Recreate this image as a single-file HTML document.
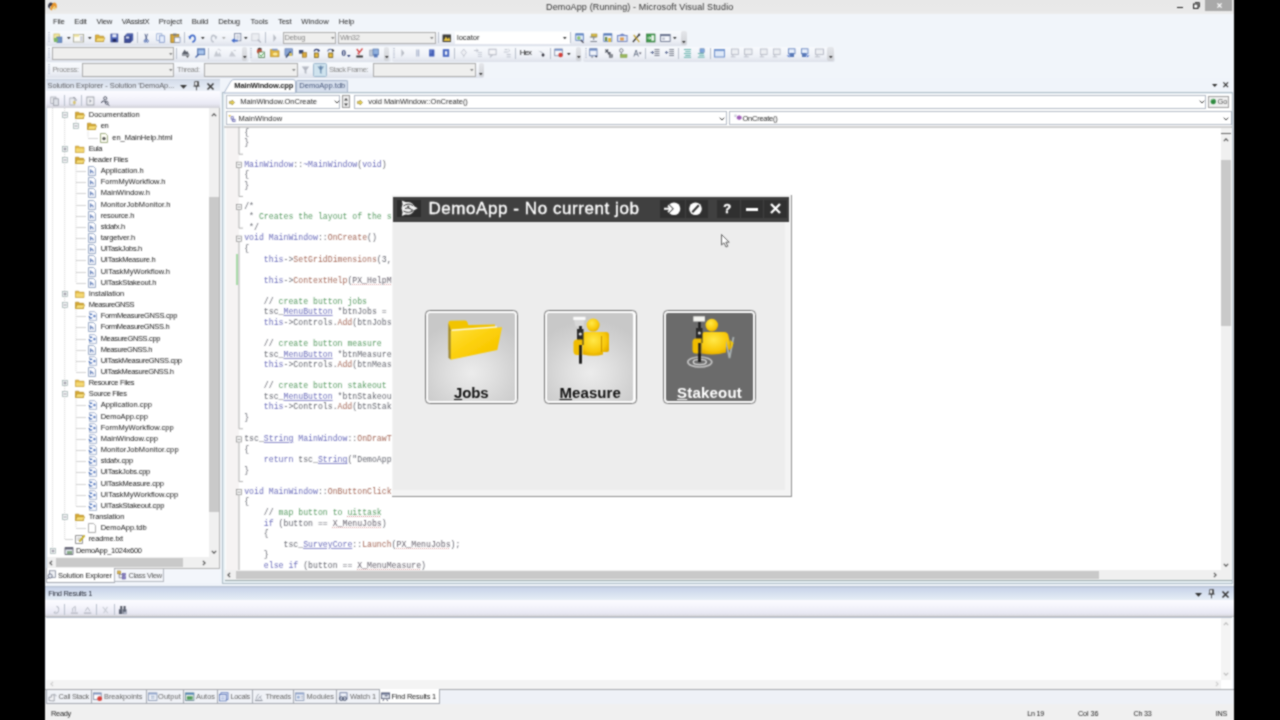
<!DOCTYPE html><html><head><meta charset="utf-8"><title>DemoApp (Running) - Microsoft Visual Studio</title><style>
html,body{margin:0;padding:0;background:#000;}
body{width:1280px;height:720px;overflow:hidden;position:relative;font-family:"Liberation Sans",sans-serif;font-size:7.5px;color:#222;}
div,span.t,span.c,svg{position:absolute;box-sizing:border-box;}
svg{overflow:visible}
span.t{white-space:pre;color:#444;}
span.c{white-space:pre;font-family:"Liberation Mono",monospace;font-size:8.2px;color:#64666f;line-height:10.56px;}
.k{color:#6a6cba}.g{color:#5a9c64}.p{color:#66616c;text-decoration:underline dotted #dca0a0 .8px;text-underline-offset:1px}.r{color:#a46858}.u{text-decoration:underline #8c8cca .7px;text-underline-offset:1px}.w{text-decoration:underline dotted #c88 .8px;text-underline-offset:1px}
</style></head><body><svg width="0" height="0" style="left:0;top:0"><defs><filter id="pgb" x="0" y="0" width="100%" height="100%" color-interpolation-filters="sRGB"><feConvolveMatrix order="3" kernelMatrix="1 2 1 2 6 2 1 2 1" divisor="18" edgeMode="duplicate" preserveAlpha="true"/></filter></defs></svg><div id="w" style="left:0;top:0;width:1280px;height:720px;background:#000;filter:url(#pgb)">
<div style="left:45px;top:0px;width:1189px;height:720px;background:#f0f4fa;"></div>
<div style="left:45px;top:0px;width:1189px;height:14.6px;background:linear-gradient(#e8e8e8 0,#e9e9e9 75%,#eeeeee 100%);"></div>
<span class="t" style="left:546px;top:1.3px;line-height:12px;font-size:9px;color:#333;letter-spacing:0.14px;">DemoApp (Running) - Microsoft Visual Studio</span>
<svg style="left:47px;top:1px" width="11" height="11" viewBox="0 0 11 11"><path d="M1 6Q1 1.5 4 1.5Q6 1.5 7 4L5.5 7Q4.5 5 3.5 5Q2.5 5 3 8z" fill="#3a3a4a"/><path d="M3 8.5Q4 4 6 2Q8 .5 9.5 3Q10.5 6 9 8Q8 5 7 5Q5.5 6 5 9.5z" fill="#e8952a"/><path d="M5.5 7.5Q6.5 5 8 6L8.5 9z" fill="#f4d060"/></svg>
<div style="left:1177px;top:6.9px;width:5.8px;height:1.1px;background:#222;"></div>
<svg style="left:1192.5px;top:2px" width="7" height="7" viewBox="0 0 7 7"><path d="M2 .6h4.4v4.4h-1" fill="none" stroke="#333" stroke-width="1"/><rect x=".6" y="2" width="4.4" height="4.4" fill="#fff" stroke="#222" stroke-width="1.1"/></svg>
<div style="left:1204.8px;top:0px;width:27.4px;height:11px;background:#a9a9a9;"></div>
<svg style="left:1216.5px;top:3px" width="5" height="5" viewBox="0 0 5 5"><path d="M.4 .4l4.2 4.2M4.6 .4l-4.2 4.2" stroke="#fff" stroke-width="1.3"/></svg>
<div style="left:45px;top:14px;width:1189px;height:64px;background:#f1f5fa;"></div>
<span class="t" style="left:53px;top:16.4px;line-height:12px;font-size:7.7px;color:#2c2c2c;letter-spacing:-0.23px;">File</span>
<span class="t" style="left:74.25px;top:16.4px;line-height:12px;font-size:7.7px;color:#2c2c2c;letter-spacing:-0.25px;">Edit</span>
<span class="t" style="left:96.5px;top:16.4px;line-height:12px;font-size:7.7px;color:#2c2c2c;letter-spacing:-0.26px;">View</span>
<span class="t" style="left:121.75px;top:16.4px;line-height:12px;font-size:7.7px;color:#2c2c2c;letter-spacing:-0.34px;">VAssistX</span>
<span class="t" style="left:158.75px;top:16.4px;line-height:12px;font-size:7.7px;color:#2c2c2c;letter-spacing:-0.1px;">Project</span>
<span class="t" style="left:191.75px;top:16.4px;line-height:12px;font-size:7.7px;color:#2c2c2c;letter-spacing:-0.12px;">Build</span>
<span class="t" style="left:218.25px;top:16.4px;line-height:12px;font-size:7.7px;color:#2c2c2c;letter-spacing:-0.19px;">Debug</span>
<span class="t" style="left:250.5px;top:16.4px;line-height:12px;font-size:7.7px;color:#2c2c2c;letter-spacing:-0.1px;">Tools</span>
<span class="t" style="left:278px;top:16.4px;line-height:12px;font-size:7.7px;color:#2c2c2c;letter-spacing:-0.16px;">Test</span>
<span class="t" style="left:301.25px;top:16.4px;line-height:12px;font-size:7.7px;color:#2c2c2c;letter-spacing:0.02px;">Window</span>
<span class="t" style="left:338.75px;top:16.4px;line-height:12px;font-size:7.7px;color:#2c2c2c;letter-spacing:-0.08px;">Help</span>
<div style="left:46px;top:30.5px;width:641px;height:15px;background:linear-gradient(#f8fafd 0%,#edf0f6 65%,#dde1ea 100%);border-radius:2px;"></div>
<div style="left:46px;top:46.5px;width:203px;height:15px;background:linear-gradient(#f8fafd 0%,#edf0f6 65%,#dde1ea 100%);border-radius:2px;"></div>
<div style="left:250px;top:46.5px;width:141px;height:15px;background:linear-gradient(#f8fafd 0%,#edf0f6 65%,#dde1ea 100%);border-radius:2px;"></div>
<div style="left:392px;top:46.5px;width:190px;height:15px;background:linear-gradient(#f8fafd 0%,#edf0f6 65%,#dde1ea 100%);border-radius:2px;"></div>
<div style="left:583px;top:46.5px;width:252px;height:15px;background:linear-gradient(#f8fafd 0%,#edf0f6 65%,#dde1ea 100%);border-radius:2px;"></div>
<div style="left:46px;top:62.5px;width:438px;height:15px;background:linear-gradient(#f8fafd 0%,#edf0f6 65%,#dde1ea 100%);border-radius:2px;"></div>
<svg style="left:48px;top:32px" width="2" height="11"><path d="M1 0V11" stroke="#9aa4b8" stroke-width="1.2" stroke-dasharray="1 1.2"/></svg>
<svg style="left:53.4px;top:32.5px" width="9.4" height="10" viewBox="0 0 10 10" preserveAspectRatio="none"><rect x="1" y="1" width="6" height="6" fill="#f3e9a0" stroke="#b9a84a" stroke-width=".6"/><rect x="4" y="4" width="5.5" height="5.5" fill="#6d90c8" stroke="#4a6aa0" stroke-width=".6"/><rect x="1" y="5" width="4" height="4" fill="#7fb86a"/></svg>
<svg style="left:73.4px;top:32.5px" width="11.2" height="10" viewBox="0 0 10 10" preserveAspectRatio="none"><rect x=".5" y="1.5" width="9" height="7.5" fill="#fbfbf4" stroke="#9a9a8a" stroke-width=".7"/><rect x=".5" y="1.5" width="5" height="2.2" fill="#efe39a"/><rect x="6.5" y="3" width="2" height="5" fill="#c9cbd8"/></svg>
<svg style="left:95.2px;top:32.5px" width="10.1" height="10" viewBox="0 0 10 10" preserveAspectRatio="none"><path d="M.5 2h3.2l1 1.2h3.8v5.3h-8z" fill="#e2b43c" stroke="#a98220" stroke-width=".6"/><path d="M2 4.8h7.8l-1.6 3.7h-7.7z" fill="#f7dc78" stroke="#a98220" stroke-width=".5"/></svg>
<svg style="left:110.2px;top:32.5px" width="8.8" height="10" viewBox="0 0 10 10" preserveAspectRatio="none"><rect x="1" y="1" width="8" height="8" fill="#4b62b8" stroke="#2a3a80" stroke-width=".6"/><rect x="2.6" y="1.3" width="4.8" height="3" fill="#e8ecf8"/><rect x="3" y="6" width="4" height="3" fill="#222a60"/></svg>
<svg style="left:124px;top:32.5px" width="9.4" height="10" viewBox="0 0 10 10" preserveAspectRatio="none"><rect x="3" y=".8" width="6.5" height="6.5" fill="#5a70c0" stroke="#2a3a80" stroke-width=".5"/><rect x="1.8" y="2" width="6.5" height="6.5" fill="#5a70c0" stroke="#2a3a80" stroke-width=".5"/><rect x=".6" y="3.2" width="6.5" height="6.5" fill="#3c4c98" stroke="#20285c" stroke-width=".5"/><rect x="2" y="3.5" width="3.6" height="2" fill="#dfe4f4"/></svg>
<svg style="left:143px;top:32.5px" width="6.5" height="10" viewBox="0 0 10 10" preserveAspectRatio="none"><path d="M3 .8l3 6M7 .8l-3 6" stroke="#3a4a78" stroke-width="1" fill="none"/><circle cx="3.2" cy="8" r="1.4" fill="none" stroke="#3a5aa8" stroke-width=".9"/><circle cx="6.8" cy="8" r="1.4" fill="none" stroke="#3a5aa8" stroke-width=".9"/></svg>
<svg style="left:155.9px;top:32.5px" width="9.4" height="10" viewBox="0 0 10 10" preserveAspectRatio="none"><rect x=".8" y=".8" width="5.5" height="6.5" fill="#f4f7fd" stroke="#7f98c8" stroke-width=".7"/><rect x="3.7" y="2.8" width="5.5" height="6.5" fill="#e3ebfa" stroke="#6f88c0" stroke-width=".7"/></svg>
<svg style="left:169.6px;top:32.5px" width="10.7" height="10" viewBox="0 0 10 10" preserveAspectRatio="none"><rect x=".8" y="1.5" width="7.4" height="8" fill="#d9a93c" stroke="#8a6a1c" stroke-width=".7"/><rect x="2.8" y=".6" width="3.4" height="2" fill="#777"/><rect x="4.2" y="4.2" width="5.2" height="5.3" fill="#f4f6fc" stroke="#6f7fa8" stroke-width=".6"/></svg>
<svg style="left:188.4px;top:32.5px" width="8.6" height="10" viewBox="0 0 10 10" preserveAspectRatio="none"><path d="M2 5.5c.5-4 6-4.2 6.3 0 .2 2.3-1.8 3.3-3.3 3.3" fill="none" stroke="#3f68c8" stroke-width="1.7"/><path d="M.3 3.2l3.6.3-1.6 3.2z" fill="#3f68c8"/></svg>
<svg style="left:210px;top:32.5px" width="7.5" height="10" viewBox="0 0 10 10" preserveAspectRatio="none"><path d="M8 5.5c-.5-4-6-4.2-6.3 0-.2 2.3 1.8 3.3 3.3 3.3" fill="none" stroke="#b9bec8" stroke-width="1.6"/><path d="M9.7 3.2l-3.6.3 1.6 3.2z" fill="#b9bec8"/></svg>
<svg style="left:230.6px;top:32.5px" width="10.4" height="10" viewBox="0 0 10 10" preserveAspectRatio="none"><rect x="3.5" y=".6" width="6" height="7.2" fill="#f2f4fa" stroke="#6a7690" stroke-width=".7"/><path d="M5 3h3M5 5h3" stroke="#8a94aa" stroke-width=".6"/><path d="M.3 7.6l3-2.4v1.5h3.2v1.9h-3.2v1.4z" fill="#3f68c8"/></svg>
<svg style="left:251.3px;top:32.5px" width="10.3" height="10" viewBox="0 0 10 10" preserveAspectRatio="none"><rect x=".8" y=".8" width="7" height="7" fill="#eceef2" stroke="#c0c4cc" stroke-width=".7"/><path d="M6.5 6.5l3 3" stroke="#b4b8c2" stroke-width="1.2"/></svg>
<svg style="left:271.5px;top:32.5px" width="5.5" height="10" viewBox="0 0 10 10" preserveAspectRatio="none"><path d="M2.5 1l5.5 4-5.5 4z" fill="#b8bcc4"/></svg>
<svg style="left:442px;top:32.5px" width="9.5" height="10" viewBox="0 0 10 10" preserveAspectRatio="none"><rect x=".6" y="1.5" width="8.8" height="7.5" fill="#3a3a3a"/><path d="M1.5 8l2.5-4.5 2 2.5 1.5-2 1.5 4z" fill="#e4c040"/></svg>
<svg style="left:575px;top:32.5px" width="9.5" height="10" viewBox="0 0 10 10" preserveAspectRatio="none"><rect x=".8" y=".8" width="8" height="6.5" fill="#dce8f8" stroke="#4f74b4" stroke-width=".8"/><rect x=".8" y=".8" width="8" height="1.6" fill="#5f84c4"/><circle cx="4" cy="5" r="1.8" fill="#8ac06a"/><path d="M6 7l3 2.8" stroke="#445" stroke-width="1.2"/></svg>
<svg style="left:589.4px;top:32.5px" width="9.4" height="10" viewBox="0 0 10 10" preserveAspectRatio="none"><rect x="2.5" y="1" width="6" height="3" fill="#e0c040" stroke="#8a7a2a" stroke-width=".5"/><path d="M.8 4h7M5 4v3M1.5 8.5h7" stroke="#7a808c" stroke-width="1"/></svg>
<svg style="left:603px;top:32.5px" width="9.5" height="10" viewBox="0 0 10 10" preserveAspectRatio="none"><rect x=".8" y=".8" width="8.5" height="7.5" fill="#f2f6fc" stroke="#4f74b4" stroke-width=".8"/><rect x=".8" y=".8" width="8.5" height="1.7" fill="#4f74b4"/><rect x="2" y="4" width="2.5" height="4" fill="#6a8a4a"/><rect x="5.5" y="5" width="3" height="4" fill="#e0b83c"/></svg>
<svg style="left:617px;top:32.5px" width="10.5" height="10" viewBox="0 0 10 10" preserveAspectRatio="none"><rect x=".6" y="2.5" width="9" height="6" fill="#dfe6f6" stroke="#5f74b4" stroke-width=".8"/><path d="M.3 3l4.7-2.5 4.7 2.5z" fill="#6f84c4"/><rect x="3" y="4.5" width="3.5" height="3" fill="#e09a4a"/></svg>
<svg style="left:632px;top:32.5px" width="8.6" height="10" viewBox="0 0 10 10" preserveAspectRatio="none"><path d="M1 9l7-7" stroke="#2a2a2a" stroke-width="1.4"/><path d="M2 2l6.5 7" stroke="#c0a030" stroke-width="1.4"/><circle cx="8.3" cy="1.8" r="1.3" fill="#444"/></svg>
<svg style="left:646px;top:32.5px" width="9.6" height="10" viewBox="0 0 10 10" preserveAspectRatio="none"><rect x=".6" y="1" width="8.8" height="8" fill="#3f9a4a" stroke="#2a6a34" stroke-width=".6"/><rect x="5.5" y="2.2" width="3" height="5.6" fill="#eef6ee"/><path d="M1.5 5h3M3.5 3.5l1.5 1.5-1.5 1.5" stroke="#fff" stroke-width=".9" fill="none"/></svg>
<svg style="left:660px;top:32.5px" width="10" height="10" viewBox="0 0 10 10" preserveAspectRatio="none"><rect x=".6" y="1.5" width="9.5" height="7" fill="#f4f6fb" stroke="#5a6480" stroke-width=".8"/><rect x=".6" y="1.5" width="9.5" height="1.6" fill="#6a7490"/><rect x="2" y="4.5" width="3" height="2.5" fill="#c4c8d4"/></svg>
<svg style="left:66.6px;top:37.1px" width="3.6" height="2.3" viewBox="0 0 4 2.5"><path d="M0 0h4l-2 2.5z" fill="#333"/></svg>
<svg style="left:87.8px;top:37.1px" width="3.6" height="2.3" viewBox="0 0 4 2.5"><path d="M0 0h4l-2 2.5z" fill="#333"/></svg>
<svg style="left:201.2px;top:37.1px" width="3.6" height="2.3" viewBox="0 0 4 2.5"><path d="M0 0h4l-2 2.5z" fill="#333"/></svg>
<svg style="left:243.9px;top:37.1px" width="3.6" height="2.3" viewBox="0 0 4 2.5"><path d="M0 0h4l-2 2.5z" fill="#333"/></svg>
<svg style="left:673.2px;top:37.1px" width="3.6" height="2.3" viewBox="0 0 4 2.5"><path d="M0 0h4l-2 2.5z" fill="#333"/></svg>
<svg style="left:222.2px;top:37.1px" width="3.6" height="2.3" viewBox="0 0 4 2.5"><path d="M0 0h4l-2 2.5z" fill="#aaa"/></svg>
<div style="left:136.5px;top:32px;width:1px;height:11px;background:#b9c0cc;"></div>
<div style="left:183.5px;top:32px;width:1px;height:11px;background:#b9c0cc;"></div>
<div style="left:264.9px;top:32px;width:1px;height:11px;background:#b9c0cc;"></div>
<div style="left:437.5px;top:32px;width:1px;height:11px;background:#b9c0cc;"></div>
<div style="left:570.1px;top:32px;width:1px;height:11px;background:#b9c0cc;"></div>
<div style="left:282.5px;top:31.7px;width:53.8px;height:12.6px;background:#efefee;border:1px solid #adadad;"></div>
<svg style="left:330.7px;top:37.1px" width="3.6" height="2.3" viewBox="0 0 4 2.5"><path d="M0 0h4l-2 2.5z" fill="#888"/></svg>
<span class="t" style="left:284.5px;top:32px;line-height:12px;font-size:7.5px;color:#8a8a8a;letter-spacing:-0.28px;">Debug</span>
<div style="left:338px;top:31.7px;width:97.6px;height:12.6px;background:#efefee;border:1px solid #adadad;"></div>
<svg style="left:430px;top:37.1px" width="3.6" height="2.3" viewBox="0 0 4 2.5"><path d="M0 0h4l-2 2.5z" fill="#888"/></svg>
<span class="t" style="left:340px;top:32px;line-height:12px;font-size:7.5px;color:#8a8a8a;letter-spacing:-0.35px;">Win32</span>
<div style="left:455px;top:31.7px;width:114.5px;height:12.6px;background:#fff;"></div>
<span class="t" style="left:457px;top:31.5px;line-height:12px;font-size:7.5px;color:#222;letter-spacing:-0.02px;">locator</span>
<svg style="left:562.6px;top:37.1px" width="3.6" height="2.3" viewBox="0 0 4 2.5"><path d="M0 0h4l-2 2.5z" fill="#333"/></svg>
<div style="left:681px;top:31px;width:6px;height:14px;background:linear-gradient(#e4e6ea,#cfd1d6);border-radius:2px;"></div>
<svg style="left:682.2px;top:40.6px" width="3.6" height="2.3" viewBox="0 0 4 2.5"><path d="M0 0h4l-2 2.5z" fill="#333"/></svg>
<svg style="left:48px;top:47.8px" width="2" height="11"><path d="M1 0V11" stroke="#9aa4b8" stroke-width="1.2" stroke-dasharray="1 1.2"/></svg>
<div style="left:51.5px;top:47.2px;width:122.8px;height:12.8px;background:#efefee;border:1px solid #adadad;"></div>
<svg style="left:168.7px;top:52.7px" width="3.6" height="2.3" viewBox="0 0 4 2.5"><path d="M0 0h4l-2 2.5z" fill="#888"/></svg>
<svg style="left:181px;top:48.3px" width="9.3" height="10" viewBox="0 0 10 10" preserveAspectRatio="none"><path d="M1 6l3-4.5 1.5 2.5 1.2-1 1.8 3z" fill="#5a5f6a"/><rect x="1" y="6.3" width="8" height="1.4" fill="#70757f"/><path d="M5.5 8.2h3l-1.5 1.6z" fill="#222"/></svg>
<svg style="left:195px;top:48.3px" width="10.3" height="10" viewBox="0 0 10 10" preserveAspectRatio="none"><rect x="2.5" y=".8" width="7" height="6" fill="#6f93cc" stroke="#3f5f9a" stroke-width=".6"/><rect x="3.3" y="2.2" width="5.4" height="3.8" fill="#a9c4ea"/><path d="M.5 9.5l3.2-3.2" stroke="#4f6aa8" stroke-width="1.4"/></svg>
<svg style="left:212.8px;top:48.3px" width="9.4" height="10" viewBox="0 0 10 10" preserveAspectRatio="none"><path d="M1 8.5l2.5-6 2 4 1.5-2.5 2 4.5z" fill="#c4c8d0"/><path d="M5 1.5a2 2 0 0 1 3 1.5" stroke="#b8bcc6" fill="none" stroke-width=".8"/></svg>
<svg style="left:227.8px;top:48.3px" width="9.4" height="10" viewBox="0 0 10 10" preserveAspectRatio="none"><path d="M1 8.5l3-5.5 4.5 5.5z" fill="#c9ccd4"/><path d="M6 2.5h2.5" stroke="#c0c4cc" stroke-width=".8"/></svg>
<svg style="left:256px;top:48.3px" width="9.4" height="10" viewBox="0 0 10 10" preserveAspectRatio="none"><circle cx="3.6" cy="3.2" r="2.6" fill="#c8503c"/><path d="M2 1.2a3 3 0 0 1 4 .2" stroke="#3a3a3a" stroke-width="1.1" fill="none"/><rect x="3" y="4" width="6" height="5.6" fill="#fbfdf8" stroke="#4a7a4a" stroke-width=".8"/><path d="M4.2 6.8l1.4 1.5 2.4-3" stroke="#2f9a3f" stroke-width="1" fill="none"/></svg>
<svg style="left:270px;top:48.3px" width="9.5" height="10" viewBox="0 0 10 10" preserveAspectRatio="none"><path d="M.5 1.5h3.2l1 1.2h4.8v6h-9z" fill="#e2b43c" stroke="#a98220" stroke-width=".6"/><ellipse cx="5.5" cy="6" rx="2.6" ry="1.5" fill="#f9e89a"/><rect x="2" y=".8" width="6" height="1.6" fill="#7a94cc"/></svg>
<svg style="left:284px;top:48.3px" width="9.5" height="10" viewBox="0 0 10 10" preserveAspectRatio="none"><rect x="1" y=".8" width="8" height="6.5" fill="#88a4d4" stroke="#4f6aa0" stroke-width=".6"/><path d="M2 9.4l5-6" stroke="#3a4a6a" stroke-width="1.5"/><rect x="5.5" y="5" width="3" height="3" fill="#d8c060"/></svg>
<svg style="left:298px;top:48.3px" width="9.5" height="10" viewBox="0 0 10 10" preserveAspectRatio="none"><rect x="1" y="2" width="4.6" height="3.6" fill="#3f4c74"/><rect x="4.5" y="4.6" width="4.6" height="4.6" fill="#d9a83a" stroke="#7a5a1a" stroke-width=".5"/></svg>
<svg style="left:312px;top:48.3px" width="9" height="10" viewBox="0 0 10 10" preserveAspectRatio="none"><path d="M2.5 3.5a2.5 2.2 0 0 1 5 0" fill="none" stroke="#2a3a70" stroke-width="1.2"/><path d="M6.5 1l2.5 1.5-2.5 1.5z" fill="#2a3a70"/><rect x="2.6" y="5" width="4.6" height="4.4" fill="#e5b93c" stroke="#5a4a1a" stroke-width=".7"/></svg>
<svg style="left:326px;top:48.3px" width="9" height="10" viewBox="0 0 10 10" preserveAspectRatio="none"><path d="M2 3.5a2.8 2.2 0 0 1 5.6 0" fill="none" stroke="#5a6a9a" stroke-width="1.1"/><path d="M6.5 1l2.8 1.2-2 2z" fill="#222"/><rect x="3" y="5" width="4.6" height="4.4" fill="#e5b93c" stroke="#5a4a1a" stroke-width=".7"/></svg>
<svg style="left:355px;top:48.3px" width="8.8" height="10" viewBox="0 0 10 10" preserveAspectRatio="none"><path d="M2 1l3 3.5 3.5-4" stroke="#d23a3a" stroke-width="1.4" fill="none"/><path d="M3 5l2 1.5" stroke="#d23a3a" stroke-width="1.2"/><rect x="1.5" y="7.6" width="7.5" height="1.8" fill="#2a2a2a"/></svg>
<svg style="left:369.4px;top:48.3px" width="10" height="10" viewBox="0 0 10 10" preserveAspectRatio="none"><rect x=".8" y="2" width="5" height="6" fill="#c4ccd8" stroke="#8a94a8" stroke-width=".6"/><rect x="4" y="1" width="5.4" height="6" fill="#8fb0de" stroke="#4a6aa0" stroke-width=".6"/><rect x="5" y="6" width="3.6" height="3.4" fill="#5a7ab8"/></svg>
<svg style="left:400px;top:48.3px" width="5.5" height="10" viewBox="0 0 10 10" preserveAspectRatio="none"><path d="M2.5 1l5.5 4-5.5 4z" fill="#b8bcc4"/></svg>
<svg style="left:414.5px;top:48.3px" width="5.5" height="10" viewBox="0 0 10 10" preserveAspectRatio="none"><rect x="2.3" y="1.5" width="2" height="7" fill="#a3aec8"/><rect x="5.7" y="1.5" width="2" height="7" fill="#a3aec8"/></svg>
<svg style="left:427.5px;top:48.3px" width="7.5" height="10" viewBox="0 0 10 10" preserveAspectRatio="none"><rect x="1.5" y="1.5" width="7" height="7" fill="#4560b8"/><rect x="1.5" y="1.5" width="4" height="4" fill="#7088d0" opacity=".6"/></svg>
<svg style="left:442px;top:48.3px" width="8" height="10" viewBox="0 0 10 10" preserveAspectRatio="none"><rect x="1" y="1.2" width="8" height="7.6" fill="#4a68c0"/><rect x="3.6" y="3.2" width="3" height="3.6" fill="#eef2fb"/></svg>
<svg style="left:460px;top:48.3px" width="7.5" height="10" viewBox="0 0 10 10" preserveAspectRatio="none"><path d="M5 1l3.5 3.5-3.5 3.5-3.5-3.5z" fill="#eef0f4" stroke="#b4b8c4" stroke-width=".8"/><path d="M5 7v2.5" stroke="#c0c4cc" stroke-width=".8"/></svg>
<svg style="left:473px;top:48.3px" width="9.5" height="10" viewBox="0 0 10 10" preserveAspectRatio="none"><path d="M1 2.5h4.5M3.5 1l2 1.5-2 1.5" stroke="#b4b8c4" stroke-width=".8" fill="none"/><path d="M5 4.5h4.5M5 6.5h4.5M5 8.5h4.5" stroke="#c4c8d2" stroke-width=".9"/></svg>
<svg style="left:487.5px;top:48.3px" width="9" height="10" viewBox="0 0 10 10" preserveAspectRatio="none"><rect x="1" y="1.2" width="8" height="5.6" fill="#f4f5f8" stroke="#a8acb8" stroke-width=".8"/><path d="M3.5 6.8l-1 2.7 3-2.7" fill="#c8ccd4" stroke="#a8acb8" stroke-width=".5"/></svg>
<svg style="left:502.5px;top:48.3px" width="8.1" height="10" viewBox="0 0 10 10" preserveAspectRatio="none"><path d="M2 1.5h3.5M1 4h5M4.5 6.5h5M4.5 8.8h5" stroke="#b8bcc8" stroke-width="1"/><path d="M6.5 1l2 1.5-2 1.5" stroke="#b4b8c4" stroke-width=".8" fill="none"/></svg>
<svg style="left:537px;top:48.3px" width="8.6" height="10" viewBox="0 0 10 10" preserveAspectRatio="none"><path d="M1 2.5l5 1.5-1 1z" fill="#c4c8d0"/><path d="M4 3.5l3.5 2" stroke="#b4b8c4" stroke-width="1"/><path d="M7 5l2 2-2 2-2-2z" fill="#3a3a44"/></svg>
<svg style="left:554.4px;top:48.3px" width="9.4" height="10" viewBox="0 0 10 10" preserveAspectRatio="none"><rect x=".8" y="1" width="8" height="6.8" fill="#f6f7fb" stroke="#6a7694" stroke-width=".7"/><rect x=".8" y="1" width="8" height="1.6" fill="#6f8cc4"/><circle cx="7" cy="7" r="2.3" fill="#d4403a"/></svg>
<svg style="left:589.4px;top:48.3px" width="9.1" height="10" viewBox="0 0 10 10" preserveAspectRatio="none"><rect x=".8" y=".8" width="8" height="7" fill="#eef2fa" stroke="#4f6aa0" stroke-width=".8"/><rect x=".8" y=".8" width="8" height="1.8" fill="#6f8cc4"/><path d="M6.5 8l1.5 1.5 1.5-1.5z" fill="#223"/><path d="M2.5 9h2" stroke="#445" stroke-width=".8"/></svg>
<svg style="left:604.4px;top:48.3px" width="9.4" height="10" viewBox="0 0 10 10" preserveAspectRatio="none"><path d="M1.5 1.5l3 3M4.5 1.5l-3 3" stroke="#4a4f5a" stroke-width="1.1"/><rect x="4" y="4" width="3" height="2.5" fill="#5a5f6a"/><rect x="5.5" y="6.5" width="3.8" height="3" fill="#8a8f9a" stroke="#555" stroke-width=".4"/></svg>
<svg style="left:618px;top:48.3px" width="9.5" height="10" viewBox="0 0 10 10" preserveAspectRatio="none"><circle cx="3.5" cy="2.5" r="1.8" fill="none" stroke="#6a6f7a" stroke-width=".9"/><path d="M3.5 4.5v3" stroke="#6a6f7a" stroke-width=".9"/><rect x="2.5" y="6.5" width="7" height="3" fill="#9ab85a" stroke="#6a8a3a" stroke-width=".4"/></svg>
<svg style="left:632.5px;top:48.3px" width="9" height="10" viewBox="0 0 10 10" preserveAspectRatio="none"><path d="M1 8.5l2.5-6.5 2.5 6.5M1.8 6.3h3.4" stroke="#6a7488" stroke-width="1" fill="none"/><path d="M6.5 4.5h3l-1.5 2z" fill="#556"/></svg>
<svg style="left:650px;top:48.3px" width="10" height="10" viewBox="0 0 10 10" preserveAspectRatio="none"><path d="M4.5 1.5h5M4.5 3.5h5M4.5 5.5h5M4.5 7.5h5" stroke="#5a6070" stroke-width=".8"/><path d="M.5 4.5h3M2 3l1.5 1.5-1.5 1.5" stroke="#3a4a7a" stroke-width=".8" fill="none"/></svg>
<svg style="left:665px;top:48.3px" width="9.5" height="10" viewBox="0 0 10 10" preserveAspectRatio="none"><path d="M4.5 1.5h5M4.5 3.5h5M4.5 5.5h5M4.5 7.5h5" stroke="#5a6070" stroke-width=".8"/><path d="M.5 4.5h3M2 3l-1.5 1.5 1.5 1.5" stroke="#3a4a7a" stroke-width=".8" fill="none"/></svg>
<svg style="left:683px;top:48.3px" width="9" height="10" viewBox="0 0 10 10" preserveAspectRatio="none"><path d="M1 1.5h8M2.5 3.5h6M1 5.5h8M2.5 7.5h6M1 9.3h8" stroke="#4fa8a0" stroke-width=".9"/></svg>
<svg style="left:697px;top:48.3px" width="8.5" height="10" viewBox="0 0 10 10" preserveAspectRatio="none"><rect x="3.5" y=".8" width="5" height="3.6" fill="#7fa8dc" stroke="#4a6aa0" stroke-width=".5"/><path d="M1 5.5h7M2.5 7.3h6M1 9.2h8" stroke="#4fa8a0" stroke-width=".9"/></svg>
<svg style="left:714px;top:48.3px" width="11" height="10" viewBox="0 0 11.2 10" preserveAspectRatio="none"><rect x=".6" y="1.5" width="10" height="7.5" fill="#dfe9f8" stroke="#5f84c4" stroke-width=".9"/><rect x=".6" y="1.5" width="10" height="1.6" fill="#7f9fd4"/></svg>
<svg style="left:730px;top:48.3px" width="9.5" height="10" viewBox="0 0 10 10" preserveAspectRatio="none"><rect x="1.5" y="1" width="7.5" height="5.5" fill="#eceef2" stroke="#b0b4c0" stroke-width=".8"/><path d="M.8 8.8h5M3 6.5v2.3" stroke="#b8bcc6" stroke-width=".9"/></svg>
<svg style="left:743px;top:48.3px" width="10" height="10" viewBox="0 0 10 10" preserveAspectRatio="none"><rect x="1.5" y="1" width="7.5" height="5.5" fill="#eceef2" stroke="#b0b4c0" stroke-width=".8"/><path d="M.8 8.8h5M3 6.5v2.3" stroke="#b8bcc6" stroke-width=".9"/></svg>
<svg style="left:759px;top:48.3px" width="9" height="10" viewBox="0 0 10 10" preserveAspectRatio="none"><rect x="1.5" y="1" width="7.5" height="5.5" fill="#eceef2" stroke="#b0b4c0" stroke-width=".8"/><path d="M.8 8.8h5M3 6.5v2.3" stroke="#b8bcc6" stroke-width=".9"/></svg>
<svg style="left:772px;top:48.3px" width="9" height="10" viewBox="0 0 10 10" preserveAspectRatio="none"><rect x="1.5" y="1" width="7.5" height="5.5" fill="#eceef2" stroke="#b0b4c0" stroke-width=".8"/><path d="M.8 8.8h5M3 6.5v2.3" stroke="#b8bcc6" stroke-width=".9"/></svg>
<svg style="left:786px;top:48.3px" width="10" height="10" viewBox="0 0 10 10" preserveAspectRatio="none"><rect x="2.5" y=".8" width="6.5" height="5" fill="#e6eefb" stroke="#5a7ab8" stroke-width=".8"/><path d="M.5 7.5h4.5l-1.5-2v4z" fill="#3f68c8"/><rect x="4" y="5" width="4" height="4" fill="#5a7ab8"/></svg>
<svg style="left:800px;top:48.3px" width="10" height="10" viewBox="0 0 10 10" preserveAspectRatio="none"><rect x="1.5" y=".8" width="6.5" height="5" fill="#e6eefb" stroke="#5a7ab8" stroke-width=".8"/><path d="M9.8 7.5h-4.5l1.5-2v4z" fill="#3f68c8"/><rect x="2" y="5" width="4" height="4" fill="#5a7ab8"/></svg>
<svg style="left:814px;top:48.3px" width="10.5" height="10" viewBox="0 0 10 10" preserveAspectRatio="none"><rect x="1.5" y="1" width="7.5" height="5.5" fill="#eceef2" stroke="#b0b4c0" stroke-width=".8"/><path d="M.8 8.8h5M3 6.5v2.3" stroke="#b8bcc6" stroke-width=".9"/></svg>
<span class="t" style="left:341.5px;top:47.3px;line-height:12px;font-size:9px;font-weight:bold;color:#2a3a70;font-family:'Liberation Serif',serif;">0</span>
<svg style="left:346.7px;top:54.9px" width="3.6" height="2.3" viewBox="0 0 4 2.5"><path d="M0 0h4l-2 2.5z" fill="#2a3a70"/></svg>
<span class="t" style="left:519.7px;top:47.3px;line-height:12px;font-size:7.8px;color:#222;letter-spacing:-0.79px;">Hex</span>
<div style="left:175.8px;top:47.8px;width:1px;height:11px;background:#b9c0cc;"></div>
<div style="left:208.2px;top:47.8px;width:1px;height:11px;background:#b9c0cc;"></div>
<div style="left:453.9px;top:47.8px;width:1px;height:11px;background:#b9c0cc;"></div>
<div style="left:515.1px;top:47.8px;width:1px;height:11px;background:#b9c0cc;"></div>
<div style="left:549.5px;top:47.8px;width:1px;height:11px;background:#b9c0cc;"></div>
<div style="left:644.5px;top:47.8px;width:1px;height:11px;background:#b9c0cc;"></div>
<div style="left:678px;top:47.8px;width:1px;height:11px;background:#b9c0cc;"></div>
<div style="left:709.5px;top:47.8px;width:1px;height:11px;background:#b9c0cc;"></div>
<svg style="left:567.2px;top:52.9px" width="3.6" height="2.3" viewBox="0 0 4 2.5"><path d="M0 0h4l-2 2.5z" fill="#333"/></svg>
<div style="left:242px;top:46.8px;width:4.6px;height:14px;background:linear-gradient(#e4e6ea,#cfd1d6);border-radius:2px;"></div>
<svg style="left:242.5px;top:56.4px" width="3.6" height="2.3" viewBox="0 0 4 2.5"><path d="M0 0h4l-2 2.5z" fill="#333"/></svg>
<div style="left:383.7px;top:46.8px;width:5.7px;height:14px;background:linear-gradient(#e4e6ea,#cfd1d6);border-radius:2px;"></div>
<svg style="left:384.75px;top:56.4px" width="3.6" height="2.3" viewBox="0 0 4 2.5"><path d="M0 0h4l-2 2.5z" fill="#333"/></svg>
<div style="left:576px;top:46.8px;width:5px;height:14px;background:linear-gradient(#e4e6ea,#cfd1d6);border-radius:2px;"></div>
<svg style="left:576.7px;top:56.4px" width="3.6" height="2.3" viewBox="0 0 4 2.5"><path d="M0 0h4l-2 2.5z" fill="#333"/></svg>
<div style="left:827px;top:46.8px;width:7px;height:14px;background:linear-gradient(#e4e6ea,#cfd1d6);border-radius:2px;"></div>
<svg style="left:828.7px;top:56.4px" width="3.6" height="2.3" viewBox="0 0 4 2.5"><path d="M0 0h4l-2 2.5z" fill="#333"/></svg>
<svg style="left:250.3px;top:47.8px" width="2" height="11"><path d="M1 0V11" stroke="#9aa4b8" stroke-width="1.2" stroke-dasharray="1 1.2"/></svg>
<svg style="left:393.4px;top:47.8px" width="2" height="11"><path d="M1 0V11" stroke="#9aa4b8" stroke-width="1.2" stroke-dasharray="1 1.2"/></svg>
<svg style="left:584.6px;top:47.8px" width="2" height="11"><path d="M1 0V11" stroke="#9aa4b8" stroke-width="1.2" stroke-dasharray="1 1.2"/></svg>
<svg style="left:48px;top:64.3px" width="2" height="11"><path d="M1 0V11" stroke="#9aa4b8" stroke-width="1.2" stroke-dasharray="1 1.2"/></svg>
<span class="t" style="left:52.4px;top:63.8px;line-height:12px;font-size:7.5px;color:#8a8a8a;letter-spacing:-0.36px;">Process:</span>
<div style="left:82px;top:63px;width:92.3px;height:13.6px;background:#efefee;border:1px solid #adadad;"></div>
<svg style="left:168.7px;top:68.9px" width="3.6" height="2.3" viewBox="0 0 4 2.5"><path d="M0 0h4l-2 2.5z" fill="#888"/></svg>
<span class="t" style="left:177px;top:63.8px;line-height:12px;font-size:7.5px;color:#8a8a8a;letter-spacing:-0.45px;">Thread:</span>
<div style="left:204.3px;top:63px;width:93.5px;height:13.6px;background:#efefee;border:1px solid #adadad;"></div>
<svg style="left:292.2px;top:68.9px" width="3.6" height="2.3" viewBox="0 0 4 2.5"><path d="M0 0h4l-2 2.5z" fill="#888"/></svg>
<svg style="left:301px;top:64.8px" width="9" height="10" viewBox="0 0 10 10" preserveAspectRatio="none"><path d="M.8 1.5h8.4l-3.2 3.8v3.7l-2-1v-2.7z" fill="#b4b8c2"/></svg>
<div style="left:313.4px;top:62.8px;width:13.6px;height:14px;background:#cfe3ee;border:1px solid #9cb6cc;border-radius:1.5px;"></div>
<svg style="left:315.5px;top:64.8px" width="9.5" height="10" viewBox="0 0 10 10" preserveAspectRatio="none"><path d="M1.5 1.5h7l-2.7 3.5v4l-1.6-1v-3z" fill="#7a9ab8"/><path d="M5 .5v4" stroke="#4a6a98" stroke-width=".8"/></svg>
<span class="t" style="left:329px;top:63.8px;line-height:12px;font-size:7.5px;color:#8a8a8a;letter-spacing:-0.47px;">Stack Frame:</span>
<div style="left:372.8px;top:63px;width:103.2px;height:13.6px;background:#efefee;border:1px solid #adadad;"></div>
<svg style="left:470.4px;top:68.9px" width="3.6" height="2.3" viewBox="0 0 4 2.5"><path d="M0 0h4l-2 2.5z" fill="#888"/></svg>
<div style="left:478.5px;top:63.3px;width:5px;height:14px;background:linear-gradient(#e4e6ea,#cfd1d6);border-radius:2px;"></div>
<svg style="left:479.2px;top:72.9px" width="3.6" height="2.3" viewBox="0 0 4 2.5"><path d="M0 0h4l-2 2.5z" fill="#333"/></svg>
<div style="left:46px;top:78.5px;width:174px;height:13px;background:linear-gradient(#c4ccd8 0,#d6deeb 12%,#dfe6f1 50%,#edf1f8 100%);"></div>
<span class="t" style="left:47.5px;top:79.7px;line-height:12px;font-size:7.4px;color:#5c5c60;letter-spacing:-0.03px;">Solution Explorer - Solution 'DemoAp...</span>
<div style="left:46px;top:91.3px;width:174px;height:16.7px;background:linear-gradient(#fbfbff 0,#f7f7fd 30%,#e9e9f4 75%,#d2d2d8 100%);"></div>
<svg style="left:50.3px;top:95.5px" width="9.5" height="10" viewBox="0 0 10 10" preserveAspectRatio="none"><rect x=".8" y="1" width="5.5" height="6.5" fill="#e8eaee" stroke="#9a9ea8" stroke-width=".7"/><rect x="3.5" y="2.8" width="5.5" height="6.5" fill="#dcdfe6" stroke="#8a8e98" stroke-width=".7"/></svg>
<svg style="left:69px;top:95.5px" width="8.3" height="10" viewBox="0 0 10 10" preserveAspectRatio="none"><rect x="1" y="2" width="6" height="7" fill="#e8eaee" stroke="#9a9ea8" stroke-width=".7"/><path d="M5 1.5a3 3 0 0 1 3.5 3.5" stroke="#8a8e98" stroke-width="1" fill="none"/><circle cx="6.5" cy="6.5" r="1.7" fill="#d8c470"/></svg>
<svg style="left:86px;top:95.5px" width="8.8" height="10" viewBox="0 0 10 10" preserveAspectRatio="none"><rect x="1" y="1" width="8" height="8" fill="#f0f1f4" stroke="#8a8e98" stroke-width=".8"/><path d="M4 3l2.5 2-2.5 2z" fill="#9a9ea8"/></svg>
<svg style="left:100.3px;top:95.5px" width="9.5" height="10" viewBox="0 0 10 10" preserveAspectRatio="none"><circle cx="5.5" cy="2.3" r="1.6" fill="none" stroke="#3a4050" stroke-width=".9"/><path d="M1.5 7a2.5 2 0 0 1 5 0" fill="none" stroke="#3a4050" stroke-width="1"/><circle cx="7" cy="6.8" r="1.5" fill="none" stroke="#3a4050" stroke-width=".8"/><path d="M8 8l1.7 1.7" stroke="#3a4050" stroke-width="1"/></svg>
<div style="left:63.5px;top:95px;width:1px;height:11px;background:#b9c0cc;"></div>
<div style="left:81px;top:95px;width:1px;height:11px;background:#b9c0cc;"></div>
<div style="left:46px;top:108px;width:174px;height:460.5px;background:#fff;border-right:1px solid #b4b4b4;border-bottom:1px solid #b4b4b4;border-left:1px solid #b9c6d6;"></div>
<div style="left:209px;top:108px;width:10px;height:449px;background:#f0f0f0;"></div>
<div style="left:209px;top:197px;width:10px;height:315px;background:#c9c9c9;"></div>
<div style="left:47px;top:557px;width:172px;height:11px;background:#f0f0f0;"></div>
<div style="left:56px;top:558px;width:127px;height:9px;background:#c9c9c9;"></div>
<div style="left:46px;top:568px;width:174px;height:15px;background:#f3f6fb;border-top:1px solid #b4b4b4;"></div>
<div style="left:46px;top:568px;width:68.5px;height:14.5px;background:#fff;border:1px solid #a4a8b0;border-top:none;"></div>
<div style="left:114px;top:568.5px;width:49.5px;height:13.5px;background:#f4f6fa;border:1px solid #b4b8c0;border-top:none;"></div>
<svg style="left:47px;top:570.25px" width="9.5" height="9.5" viewBox="0 0 10 10" preserveAspectRatio="none"><rect x="2.5" y=".8" width="6.5" height="7" fill="#f0f2f6" stroke="#7a8094" stroke-width=".8"/><circle cx="3.3" cy="6.3" r="2.2" fill="#e8ecf4" stroke="#4a5068" stroke-width=".8"/><path d="M1.8 8l-1.3 1.5" stroke="#4a5068" stroke-width="1"/></svg>
<svg style="left:116.5px;top:570.25px" width="9.5" height="9.5" viewBox="0 0 10 10" preserveAspectRatio="none"><rect x=".8" y="1" width="3" height="3" fill="#e0b84c" stroke="#8a6a1a" stroke-width=".5"/><rect x="5.5" y="3.5" width="3.5" height="2.5" fill="#8f7fc8" stroke="#4a4a8a" stroke-width=".5"/><rect x="5.5" y="7" width="3.5" height="2.5" fill="#8f7fc8" stroke="#4a4a8a" stroke-width=".5"/><path d="M2.3 4v4.2h3.2M2.3 4.8h3.2" stroke="#556" stroke-width=".6" fill="none"/></svg>
<span class="t" style="left:58px;top:569.6px;line-height:12px;font-size:7.4px;color:#222;letter-spacing:-0.14px;">Solution Explorer</span>
<span class="t" style="left:128.4px;top:569.6px;line-height:12px;font-size:7.4px;color:#555;letter-spacing:-0.3px;">Class View</span>
<svg style="left:0;top:0" width="1280" height="720"><g stroke="#c4c4c4" stroke-width=".8" stroke-dasharray="1 1" fill="none"><path d="M64.7 108V539.38M52.6 108V550.54M76 120.3V126.46M76 164.94V282.7M76 310.02V371.98M76 399.3V505.9M76 522.06V528.22M88 131.46V137.62"/></g></svg>
<svg style="left:61.7px;top:112.3px" width="6" height="6" viewBox="0 0 6 6"><rect x=".4" y=".4" width="5.2" height="5.2" fill="#fff" stroke="#9aa" stroke-width=".7"/><path d="M1.5 3h3" stroke="#556" stroke-width=".7"/></svg>
<svg style="left:75.3px;top:111.3px" width="10" height="8" viewBox="0 0 10 8"><path d="M.5 1.2h3.2l.9 1.1h3.9v5.2h-8z" fill="#d9a930" stroke="#a88018" stroke-width=".6"/><path d="M2 3.8h7.7l-1.5 3.7h-7.7z" fill="#f6dc78" stroke="#a88018" stroke-width=".5"/></svg>
<span class="t" style="left:88.7px;top:109.3px;line-height:12px;font-size:7.5px;color:#161616;letter-spacing:0.04px;">Documentation</span>
<svg style="left:73px;top:123.46px" width="6" height="6" viewBox="0 0 6 6"><rect x=".4" y=".4" width="5.2" height="5.2" fill="#fff" stroke="#9aa" stroke-width=".7"/><path d="M1.5 3h3" stroke="#556" stroke-width=".7"/></svg>
<svg style="left:87px;top:122.46px" width="10" height="8" viewBox="0 0 10 8"><path d="M.5 1.2h3.2l.9 1.1h3.9v5.2h-8z" fill="#d9a930" stroke="#a88018" stroke-width=".6"/><path d="M2 3.8h7.7l-1.5 3.7h-7.7z" fill="#f6dc78" stroke="#a88018" stroke-width=".5"/></svg>
<span class="t" style="left:100.7px;top:120.46px;line-height:12px;font-size:7.5px;color:#161616;letter-spacing:-0.42px;">en</span>
<div style="left:88px;top:137.62px;width:10.3px;height:0.8px;background:#d4d4d4;"></div>
<svg style="left:100.3px;top:132.62px" width="8" height="10" viewBox="0 0 8 10"><path d="M.5 .5h5l2 2v7h-7z" fill="#fdfdf4" stroke="#8b9a6a" stroke-width=".8"/><circle cx="4" cy="5.6" r="1.7" fill="#555"/></svg>
<span class="t" style="left:112.3px;top:131.62px;line-height:12px;font-size:7.5px;color:#161616;letter-spacing:-0.03px;">en_MainHelp.html</span>
<svg style="left:61.7px;top:145.78px" width="6" height="6" viewBox="0 0 6 6"><rect x=".4" y=".4" width="5.2" height="5.2" fill="#fff" stroke="#9aa" stroke-width=".7"/><path d="M1.5 3h3M3 1.5v3" stroke="#556" stroke-width=".7"/></svg>
<svg style="left:75.3px;top:144.78px" width="9.5" height="8" viewBox="0 0 9.5 8"><path d="M.5 1.2h3.2l.9 1.1h4.4v5.2h-8.5z" fill="#e6b83e" stroke="#b08820" stroke-width=".6"/><path d="M.8 3.3h7.9v4h-7.9z" fill="#f4d873"/></svg>
<span class="t" style="left:88.7px;top:142.78px;line-height:12px;font-size:7.5px;color:#161616;letter-spacing:-0.45px;">Eula</span>
<svg style="left:61.7px;top:156.94px" width="6" height="6" viewBox="0 0 6 6"><rect x=".4" y=".4" width="5.2" height="5.2" fill="#fff" stroke="#9aa" stroke-width=".7"/><path d="M1.5 3h3" stroke="#556" stroke-width=".7"/></svg>
<svg style="left:75.3px;top:155.94px" width="10" height="8" viewBox="0 0 10 8"><path d="M.5 1.2h3.2l.9 1.1h3.9v5.2h-8z" fill="#d9a930" stroke="#a88018" stroke-width=".6"/><path d="M2 3.8h7.7l-1.5 3.7h-7.7z" fill="#f6dc78" stroke="#a88018" stroke-width=".5"/></svg>
<span class="t" style="left:88.7px;top:153.94px;line-height:12px;font-size:7.5px;color:#161616;letter-spacing:-0.27px;">Header Files</span>
<div style="left:76px;top:171.1px;width:10px;height:0.8px;background:#d4d4d4;"></div>
<svg style="left:88px;top:166.1px" width="8" height="10" viewBox="0 0 8 10"><path d="M.5 .5h5l2 2v7h-7z" fill="#fdfdff" stroke="#7f94b8" stroke-width=".8"/><path d="M2.6 3.4v4.2M2.6 5.6q1.6-1.2 2.4 0v2" fill="none" stroke="#3a5fa8" stroke-width=".9"/></svg>
<span class="t" style="left:100.7px;top:165.1px;line-height:12px;font-size:7.5px;color:#161616;letter-spacing:0.01px;">Application.h</span>
<div style="left:76px;top:182.26px;width:10px;height:0.8px;background:#d4d4d4;"></div>
<svg style="left:88px;top:177.26px" width="8" height="10" viewBox="0 0 8 10"><path d="M.5 .5h5l2 2v7h-7z" fill="#fdfdff" stroke="#7f94b8" stroke-width=".8"/><path d="M2.6 3.4v4.2M2.6 5.6q1.6-1.2 2.4 0v2" fill="none" stroke="#3a5fa8" stroke-width=".9"/></svg>
<span class="t" style="left:100.7px;top:176.26px;line-height:12px;font-size:7.5px;color:#161616;letter-spacing:0.05px;">FormMyWorkflow.h</span>
<div style="left:76px;top:193.42px;width:10px;height:0.8px;background:#d4d4d4;"></div>
<svg style="left:88px;top:188.42px" width="8" height="10" viewBox="0 0 8 10"><path d="M.5 .5h5l2 2v7h-7z" fill="#fdfdff" stroke="#7f94b8" stroke-width=".8"/><path d="M2.6 3.4v4.2M2.6 5.6q1.6-1.2 2.4 0v2" fill="none" stroke="#3a5fa8" stroke-width=".9"/></svg>
<span class="t" style="left:100.7px;top:187.42px;line-height:12px;font-size:7.5px;color:#161616;letter-spacing:0.04px;">MainWindow.h</span>
<div style="left:76px;top:204.58px;width:10px;height:0.8px;background:#d4d4d4;"></div>
<svg style="left:88px;top:199.58px" width="8" height="10" viewBox="0 0 8 10"><path d="M.5 .5h5l2 2v7h-7z" fill="#fdfdff" stroke="#7f94b8" stroke-width=".8"/><path d="M2.6 3.4v4.2M2.6 5.6q1.6-1.2 2.4 0v2" fill="none" stroke="#3a5fa8" stroke-width=".9"/></svg>
<span class="t" style="left:100.7px;top:198.58px;line-height:12px;font-size:7.5px;color:#161616;letter-spacing:0.1px;">MonitorJobMonitor.h</span>
<div style="left:76px;top:215.74px;width:10px;height:0.8px;background:#d4d4d4;"></div>
<svg style="left:88px;top:210.74px" width="8" height="10" viewBox="0 0 8 10"><path d="M.5 .5h5l2 2v7h-7z" fill="#fdfdff" stroke="#7f94b8" stroke-width=".8"/><path d="M2.6 3.4v4.2M2.6 5.6q1.6-1.2 2.4 0v2" fill="none" stroke="#3a5fa8" stroke-width=".9"/></svg>
<span class="t" style="left:100.7px;top:209.74px;line-height:12px;font-size:7.5px;color:#161616;letter-spacing:-0.19px;">resource.h</span>
<div style="left:76px;top:226.9px;width:10px;height:0.8px;background:#d4d4d4;"></div>
<svg style="left:88px;top:221.9px" width="8" height="10" viewBox="0 0 8 10"><path d="M.5 .5h5l2 2v7h-7z" fill="#fdfdff" stroke="#7f94b8" stroke-width=".8"/><path d="M2.6 3.4v4.2M2.6 5.6q1.6-1.2 2.4 0v2" fill="none" stroke="#3a5fa8" stroke-width=".9"/></svg>
<span class="t" style="left:100.7px;top:220.9px;line-height:12px;font-size:7.5px;color:#161616;letter-spacing:-0.25px;">stdafx.h</span>
<div style="left:76px;top:238.06px;width:10px;height:0.8px;background:#d4d4d4;"></div>
<svg style="left:88px;top:233.06px" width="8" height="10" viewBox="0 0 8 10"><path d="M.5 .5h5l2 2v7h-7z" fill="#fdfdff" stroke="#7f94b8" stroke-width=".8"/><path d="M2.6 3.4v4.2M2.6 5.6q1.6-1.2 2.4 0v2" fill="none" stroke="#3a5fa8" stroke-width=".9"/></svg>
<span class="t" style="left:100.7px;top:232.06px;line-height:12px;font-size:7.5px;color:#161616;letter-spacing:-0.1px;">targetver.h</span>
<div style="left:76px;top:249.22px;width:10px;height:0.8px;background:#d4d4d4;"></div>
<svg style="left:88px;top:244.22px" width="8" height="10" viewBox="0 0 8 10"><path d="M.5 .5h5l2 2v7h-7z" fill="#fdfdff" stroke="#7f94b8" stroke-width=".8"/><path d="M2.6 3.4v4.2M2.6 5.6q1.6-1.2 2.4 0v2" fill="none" stroke="#3a5fa8" stroke-width=".9"/></svg>
<span class="t" style="left:100.7px;top:243.22px;line-height:12px;font-size:7.5px;color:#161616;letter-spacing:-0.31px;">UITaskJobs.h</span>
<div style="left:76px;top:260.38px;width:10px;height:0.8px;background:#d4d4d4;"></div>
<svg style="left:88px;top:255.38px" width="8" height="10" viewBox="0 0 8 10"><path d="M.5 .5h5l2 2v7h-7z" fill="#fdfdff" stroke="#7f94b8" stroke-width=".8"/><path d="M2.6 3.4v4.2M2.6 5.6q1.6-1.2 2.4 0v2" fill="none" stroke="#3a5fa8" stroke-width=".9"/></svg>
<span class="t" style="left:100.7px;top:254.38px;line-height:12px;font-size:7.5px;color:#161616;letter-spacing:-0.24px;">UITaskMeasure.h</span>
<div style="left:76px;top:271.54px;width:10px;height:0.8px;background:#d4d4d4;"></div>
<svg style="left:88px;top:266.54px" width="8" height="10" viewBox="0 0 8 10"><path d="M.5 .5h5l2 2v7h-7z" fill="#fdfdff" stroke="#7f94b8" stroke-width=".8"/><path d="M2.6 3.4v4.2M2.6 5.6q1.6-1.2 2.4 0v2" fill="none" stroke="#3a5fa8" stroke-width=".9"/></svg>
<span class="t" style="left:100.7px;top:265.54px;line-height:12px;font-size:7.5px;color:#161616;letter-spacing:-0.01px;">UITaskMyWorkflow.h</span>
<div style="left:76px;top:282.7px;width:10px;height:0.8px;background:#d4d4d4;"></div>
<svg style="left:88px;top:277.7px" width="8" height="10" viewBox="0 0 8 10"><path d="M.5 .5h5l2 2v7h-7z" fill="#fdfdff" stroke="#7f94b8" stroke-width=".8"/><path d="M2.6 3.4v4.2M2.6 5.6q1.6-1.2 2.4 0v2" fill="none" stroke="#3a5fa8" stroke-width=".9"/></svg>
<span class="t" style="left:100.7px;top:276.7px;line-height:12px;font-size:7.5px;color:#161616;letter-spacing:-0.21px;">UITaskStakeout.h</span>
<svg style="left:61.7px;top:290.86px" width="6" height="6" viewBox="0 0 6 6"><rect x=".4" y=".4" width="5.2" height="5.2" fill="#fff" stroke="#9aa" stroke-width=".7"/><path d="M1.5 3h3M3 1.5v3" stroke="#556" stroke-width=".7"/></svg>
<svg style="left:75.3px;top:289.86px" width="9.5" height="8" viewBox="0 0 9.5 8"><path d="M.5 1.2h3.2l.9 1.1h4.4v5.2h-8.5z" fill="#e6b83e" stroke="#b08820" stroke-width=".6"/><path d="M.8 3.3h7.9v4h-7.9z" fill="#f4d873"/></svg>
<span class="t" style="left:88.7px;top:287.86px;line-height:12px;font-size:7.5px;color:#161616;letter-spacing:-0.03px;">Installation</span>
<svg style="left:61.7px;top:302.02px" width="6" height="6" viewBox="0 0 6 6"><rect x=".4" y=".4" width="5.2" height="5.2" fill="#fff" stroke="#9aa" stroke-width=".7"/><path d="M1.5 3h3" stroke="#556" stroke-width=".7"/></svg>
<svg style="left:75.3px;top:301.02px" width="10" height="8" viewBox="0 0 10 8"><path d="M.5 1.2h3.2l.9 1.1h3.9v5.2h-8z" fill="#d9a930" stroke="#a88018" stroke-width=".6"/><path d="M2 3.8h7.7l-1.5 3.7h-7.7z" fill="#f6dc78" stroke="#a88018" stroke-width=".5"/></svg>
<span class="t" style="left:88.7px;top:299.02px;line-height:12px;font-size:7.5px;color:#161616;letter-spacing:-0.45px;">MeasureGNSS</span>
<div style="left:76px;top:316.18px;width:10px;height:0.8px;background:#d4d4d4;"></div>
<svg style="left:88px;top:311.18px" width="9" height="10" viewBox="0 0 9 10"><path d="M1.5 .6h5l2 2v6.8h-7z" fill="#fdfdff" stroke="#93a4c4" stroke-width=".8"/><path d="M4.2 3.6a1.9 1.9 0 1 0 0 3" fill="none" stroke="#3560b0" stroke-width="1.05"/><path d="M5 5.1h2.8M6.4 3.8v2.6" stroke="#3560b0" stroke-width=".8"/><path d="M0 4.2h2" stroke="#fff" stroke-width="1.4"/></svg>
<span class="t" style="left:100.7px;top:310.18px;line-height:12px;font-size:7.5px;color:#161616;letter-spacing:-0.3px;">FormMeasureGNSS.cpp</span>
<div style="left:76px;top:327.34px;width:10px;height:0.8px;background:#d4d4d4;"></div>
<svg style="left:88px;top:322.34px" width="8" height="10" viewBox="0 0 8 10"><path d="M.5 .5h5l2 2v7h-7z" fill="#fdfdff" stroke="#7f94b8" stroke-width=".8"/><path d="M2.6 3.4v4.2M2.6 5.6q1.6-1.2 2.4 0v2" fill="none" stroke="#3a5fa8" stroke-width=".9"/></svg>
<span class="t" style="left:100.7px;top:321.34px;line-height:12px;font-size:7.5px;color:#161616;letter-spacing:-0.33px;">FormMeasureGNSS.h</span>
<div style="left:76px;top:338.5px;width:10px;height:0.8px;background:#d4d4d4;"></div>
<svg style="left:88px;top:333.5px" width="9" height="10" viewBox="0 0 9 10"><path d="M1.5 .6h5l2 2v6.8h-7z" fill="#fdfdff" stroke="#93a4c4" stroke-width=".8"/><path d="M4.2 3.6a1.9 1.9 0 1 0 0 3" fill="none" stroke="#3560b0" stroke-width="1.05"/><path d="M5 5.1h2.8M6.4 3.8v2.6" stroke="#3560b0" stroke-width=".8"/><path d="M0 4.2h2" stroke="#fff" stroke-width="1.4"/></svg>
<span class="t" style="left:100.7px;top:332.5px;line-height:12px;font-size:7.5px;color:#161616;letter-spacing:-0.35px;">MeasureGNSS.cpp</span>
<div style="left:76px;top:349.66px;width:10px;height:0.8px;background:#d4d4d4;"></div>
<svg style="left:88px;top:344.66px" width="8" height="10" viewBox="0 0 8 10"><path d="M.5 .5h5l2 2v7h-7z" fill="#fdfdff" stroke="#7f94b8" stroke-width=".8"/><path d="M2.6 3.4v4.2M2.6 5.6q1.6-1.2 2.4 0v2" fill="none" stroke="#3a5fa8" stroke-width=".9"/></svg>
<span class="t" style="left:100.7px;top:343.66px;line-height:12px;font-size:7.5px;color:#161616;letter-spacing:-0.41px;">MeasureGNSS.h</span>
<div style="left:76px;top:360.82px;width:10px;height:0.8px;background:#d4d4d4;"></div>
<svg style="left:88px;top:355.82px" width="9" height="10" viewBox="0 0 9 10"><path d="M1.5 .6h5l2 2v6.8h-7z" fill="#fdfdff" stroke="#93a4c4" stroke-width=".8"/><path d="M4.2 3.6a1.9 1.9 0 1 0 0 3" fill="none" stroke="#3560b0" stroke-width="1.05"/><path d="M5 5.1h2.8M6.4 3.8v2.6" stroke="#3560b0" stroke-width=".8"/><path d="M0 4.2h2" stroke="#fff" stroke-width="1.4"/></svg>
<span class="t" style="left:100.7px;top:354.82px;line-height:12px;font-size:7.5px;color:#161616;letter-spacing:-0.31px;">UITaskMeasureGNSS.cpp</span>
<div style="left:76px;top:371.98px;width:10px;height:0.8px;background:#d4d4d4;"></div>
<svg style="left:88px;top:366.98px" width="8" height="10" viewBox="0 0 8 10"><path d="M.5 .5h5l2 2v7h-7z" fill="#fdfdff" stroke="#7f94b8" stroke-width=".8"/><path d="M2.6 3.4v4.2M2.6 5.6q1.6-1.2 2.4 0v2" fill="none" stroke="#3a5fa8" stroke-width=".9"/></svg>
<span class="t" style="left:100.7px;top:365.98px;line-height:12px;font-size:7.5px;color:#161616;letter-spacing:-0.35px;">UITaskMeasureGNSS.h</span>
<svg style="left:61.7px;top:380.14px" width="6" height="6" viewBox="0 0 6 6"><rect x=".4" y=".4" width="5.2" height="5.2" fill="#fff" stroke="#9aa" stroke-width=".7"/><path d="M1.5 3h3M3 1.5v3" stroke="#556" stroke-width=".7"/></svg>
<svg style="left:75.3px;top:379.14px" width="9.5" height="8" viewBox="0 0 9.5 8"><path d="M.5 1.2h3.2l.9 1.1h4.4v5.2h-8.5z" fill="#e6b83e" stroke="#b08820" stroke-width=".6"/><path d="M.8 3.3h7.9v4h-7.9z" fill="#f4d873"/></svg>
<span class="t" style="left:88.7px;top:377.14px;line-height:12px;font-size:7.5px;color:#161616;letter-spacing:-0.32px;">Resource Files</span>
<svg style="left:61.7px;top:391.3px" width="6" height="6" viewBox="0 0 6 6"><rect x=".4" y=".4" width="5.2" height="5.2" fill="#fff" stroke="#9aa" stroke-width=".7"/><path d="M1.5 3h3" stroke="#556" stroke-width=".7"/></svg>
<svg style="left:75.3px;top:390.3px" width="10" height="8" viewBox="0 0 10 8"><path d="M.5 1.2h3.2l.9 1.1h3.9v5.2h-8z" fill="#d9a930" stroke="#a88018" stroke-width=".6"/><path d="M2 3.8h7.7l-1.5 3.7h-7.7z" fill="#f6dc78" stroke="#a88018" stroke-width=".5"/></svg>
<span class="t" style="left:88.7px;top:388.3px;line-height:12px;font-size:7.5px;color:#161616;letter-spacing:-0.31px;">Source Files</span>
<div style="left:76px;top:405.46px;width:10px;height:0.8px;background:#d4d4d4;"></div>
<svg style="left:88px;top:400.46px" width="9" height="10" viewBox="0 0 9 10"><path d="M1.5 .6h5l2 2v6.8h-7z" fill="#fdfdff" stroke="#93a4c4" stroke-width=".8"/><path d="M4.2 3.6a1.9 1.9 0 1 0 0 3" fill="none" stroke="#3560b0" stroke-width="1.05"/><path d="M5 5.1h2.8M6.4 3.8v2.6" stroke="#3560b0" stroke-width=".8"/><path d="M0 4.2h2" stroke="#fff" stroke-width="1.4"/></svg>
<span class="t" style="left:100.7px;top:399.46px;line-height:12px;font-size:7.5px;color:#161616;letter-spacing:0.03px;">Application.cpp</span>
<div style="left:76px;top:416.62px;width:10px;height:0.8px;background:#d4d4d4;"></div>
<svg style="left:88px;top:411.62px" width="9" height="10" viewBox="0 0 9 10"><path d="M1.5 .6h5l2 2v6.8h-7z" fill="#fdfdff" stroke="#93a4c4" stroke-width=".8"/><path d="M4.2 3.6a1.9 1.9 0 1 0 0 3" fill="none" stroke="#3560b0" stroke-width="1.05"/><path d="M5 5.1h2.8M6.4 3.8v2.6" stroke="#3560b0" stroke-width=".8"/><path d="M0 4.2h2" stroke="#fff" stroke-width="1.4"/></svg>
<span class="t" style="left:100.7px;top:410.62px;line-height:12px;font-size:7.5px;color:#161616;letter-spacing:-0.04px;">DemoApp.cpp</span>
<div style="left:76px;top:427.78px;width:10px;height:0.8px;background:#d4d4d4;"></div>
<svg style="left:88px;top:422.78px" width="9" height="10" viewBox="0 0 9 10"><path d="M1.5 .6h5l2 2v6.8h-7z" fill="#fdfdff" stroke="#93a4c4" stroke-width=".8"/><path d="M4.2 3.6a1.9 1.9 0 1 0 0 3" fill="none" stroke="#3560b0" stroke-width="1.05"/><path d="M5 5.1h2.8M6.4 3.8v2.6" stroke="#3560b0" stroke-width=".8"/><path d="M0 4.2h2" stroke="#fff" stroke-width="1.4"/></svg>
<span class="t" style="left:100.7px;top:421.78px;line-height:12px;font-size:7.5px;color:#161616;letter-spacing:0.06px;">FormMyWorkflow.cpp</span>
<div style="left:76px;top:438.94px;width:10px;height:0.8px;background:#d4d4d4;"></div>
<svg style="left:88px;top:433.94px" width="9" height="10" viewBox="0 0 9 10"><path d="M1.5 .6h5l2 2v6.8h-7z" fill="#fdfdff" stroke="#93a4c4" stroke-width=".8"/><path d="M4.2 3.6a1.9 1.9 0 1 0 0 3" fill="none" stroke="#3560b0" stroke-width="1.05"/><path d="M5 5.1h2.8M6.4 3.8v2.6" stroke="#3560b0" stroke-width=".8"/><path d="M0 4.2h2" stroke="#fff" stroke-width="1.4"/></svg>
<span class="t" style="left:100.7px;top:432.94px;line-height:12px;font-size:7.5px;color:#161616;letter-spacing:0.04px;">MainWindow.cpp</span>
<div style="left:76px;top:450.1px;width:10px;height:0.8px;background:#d4d4d4;"></div>
<svg style="left:88px;top:445.1px" width="9" height="10" viewBox="0 0 9 10"><path d="M1.5 .6h5l2 2v6.8h-7z" fill="#fdfdff" stroke="#93a4c4" stroke-width=".8"/><path d="M4.2 3.6a1.9 1.9 0 1 0 0 3" fill="none" stroke="#3560b0" stroke-width="1.05"/><path d="M5 5.1h2.8M6.4 3.8v2.6" stroke="#3560b0" stroke-width=".8"/><path d="M0 4.2h2" stroke="#fff" stroke-width="1.4"/></svg>
<span class="t" style="left:100.7px;top:444.1px;line-height:12px;font-size:7.5px;color:#161616;letter-spacing:0.1px;">MonitorJobMonitor.cpp</span>
<div style="left:76px;top:461.26px;width:10px;height:0.8px;background:#d4d4d4;"></div>
<svg style="left:88px;top:456.26px" width="9" height="10" viewBox="0 0 9 10"><path d="M1.5 .6h5l2 2v6.8h-7z" fill="#fdfdff" stroke="#93a4c4" stroke-width=".8"/><path d="M4.2 3.6a1.9 1.9 0 1 0 0 3" fill="none" stroke="#3560b0" stroke-width="1.05"/><path d="M5 5.1h2.8M6.4 3.8v2.6" stroke="#3560b0" stroke-width=".8"/><path d="M0 4.2h2" stroke="#fff" stroke-width="1.4"/></svg>
<span class="t" style="left:100.7px;top:455.26px;line-height:12px;font-size:7.5px;color:#161616;letter-spacing:-0.19px;">stdafx.cpp</span>
<div style="left:76px;top:472.42px;width:10px;height:0.8px;background:#d4d4d4;"></div>
<svg style="left:88px;top:467.42px" width="9" height="10" viewBox="0 0 9 10"><path d="M1.5 .6h5l2 2v6.8h-7z" fill="#fdfdff" stroke="#93a4c4" stroke-width=".8"/><path d="M4.2 3.6a1.9 1.9 0 1 0 0 3" fill="none" stroke="#3560b0" stroke-width="1.05"/><path d="M5 5.1h2.8M6.4 3.8v2.6" stroke="#3560b0" stroke-width=".8"/><path d="M0 4.2h2" stroke="#fff" stroke-width="1.4"/></svg>
<span class="t" style="left:100.7px;top:466.42px;line-height:12px;font-size:7.5px;color:#161616;letter-spacing:-0.26px;">UITaskJobs.cpp</span>
<div style="left:76px;top:483.58px;width:10px;height:0.8px;background:#d4d4d4;"></div>
<svg style="left:88px;top:478.58px" width="9" height="10" viewBox="0 0 9 10"><path d="M1.5 .6h5l2 2v6.8h-7z" fill="#fdfdff" stroke="#93a4c4" stroke-width=".8"/><path d="M4.2 3.6a1.9 1.9 0 1 0 0 3" fill="none" stroke="#3560b0" stroke-width="1.05"/><path d="M5 5.1h2.8M6.4 3.8v2.6" stroke="#3560b0" stroke-width=".8"/><path d="M0 4.2h2" stroke="#fff" stroke-width="1.4"/></svg>
<span class="t" style="left:100.7px;top:477.58px;line-height:12px;font-size:7.5px;color:#161616;letter-spacing:-0.19px;">UITaskMeasure.cpp</span>
<div style="left:76px;top:494.74px;width:10px;height:0.8px;background:#d4d4d4;"></div>
<svg style="left:88px;top:489.74px" width="9" height="10" viewBox="0 0 9 10"><path d="M1.5 .6h5l2 2v6.8h-7z" fill="#fdfdff" stroke="#93a4c4" stroke-width=".8"/><path d="M4.2 3.6a1.9 1.9 0 1 0 0 3" fill="none" stroke="#3560b0" stroke-width="1.05"/><path d="M5 5.1h2.8M6.4 3.8v2.6" stroke="#3560b0" stroke-width=".8"/><path d="M0 4.2h2" stroke="#fff" stroke-width="1.4"/></svg>
<span class="t" style="left:100.7px;top:488.74px;line-height:12px;font-size:7.5px;color:#161616;letter-spacing:-0px;">UITaskMyWorkflow.cpp</span>
<div style="left:76px;top:505.9px;width:10px;height:0.8px;background:#d4d4d4;"></div>
<svg style="left:88px;top:500.9px" width="9" height="10" viewBox="0 0 9 10"><path d="M1.5 .6h5l2 2v6.8h-7z" fill="#fdfdff" stroke="#93a4c4" stroke-width=".8"/><path d="M4.2 3.6a1.9 1.9 0 1 0 0 3" fill="none" stroke="#3560b0" stroke-width="1.05"/><path d="M5 5.1h2.8M6.4 3.8v2.6" stroke="#3560b0" stroke-width=".8"/><path d="M0 4.2h2" stroke="#fff" stroke-width="1.4"/></svg>
<span class="t" style="left:100.7px;top:499.9px;line-height:12px;font-size:7.5px;color:#161616;letter-spacing:-0.18px;">UITaskStakeout.cpp</span>
<svg style="left:61.7px;top:514.06px" width="6" height="6" viewBox="0 0 6 6"><rect x=".4" y=".4" width="5.2" height="5.2" fill="#fff" stroke="#9aa" stroke-width=".7"/><path d="M1.5 3h3" stroke="#556" stroke-width=".7"/></svg>
<svg style="left:75.3px;top:513.06px" width="10" height="8" viewBox="0 0 10 8"><path d="M.5 1.2h3.2l.9 1.1h3.9v5.2h-8z" fill="#d9a930" stroke="#a88018" stroke-width=".6"/><path d="M2 3.8h7.7l-1.5 3.7h-7.7z" fill="#f6dc78" stroke="#a88018" stroke-width=".5"/></svg>
<span class="t" style="left:88.7px;top:511.06px;line-height:12px;font-size:7.5px;color:#161616;letter-spacing:-0.12px;">Translation</span>
<div style="left:76px;top:528.22px;width:10px;height:0.8px;background:#d4d4d4;"></div>
<svg style="left:88px;top:523.22px" width="8" height="10" viewBox="0 0 8 10"><path d="M.5 .5h5l2 2v7h-7z" fill="#fff" stroke="#999" stroke-width=".8"/></svg>
<span class="t" style="left:100.7px;top:522.22px;line-height:12px;font-size:7.5px;color:#161616;letter-spacing:0.01px;">DemoApp.tdb</span>
<div style="left:64.7px;top:539.38px;width:8.6px;height:0.8px;background:#d4d4d4;"></div>
<svg style="left:75.3px;top:534.38px" width="10" height="10" viewBox="0 0 10 10"><path d="M.5 1.5h7v8h-7z" fill="#fff" stroke="#777" stroke-width=".8"/><path d="M2 4h4M2 6h4" stroke="#888" stroke-width=".6"/><path d="M4 7l5-6 1 1-5 6z" fill="#e2c21e" stroke="#8a7a10" stroke-width=".4"/></svg>
<span class="t" style="left:88.7px;top:533.38px;line-height:12px;font-size:7.5px;color:#161616;letter-spacing:-0.11px;">readme.txt</span>
<svg style="left:49.6px;top:547.54px" width="6" height="6" viewBox="0 0 6 6"><rect x=".4" y=".4" width="5.2" height="5.2" fill="#fff" stroke="#9aa" stroke-width=".7"/><path d="M1.5 3h3M3 1.5v3" stroke="#556" stroke-width=".7"/></svg>
<svg style="left:63.5px;top:545.54px" width="11" height="10" viewBox="0 0 11 10"><path d="M1 1.5h8v7h-8z" fill="#e9eef6" stroke="#556" stroke-width=".8"/><path d="M1 1.5h8v2h-8z" fill="#667"/><path d="M3 5h5v3h-5z" fill="#8a8"/></svg>
<span class="t" style="left:76px;top:544.54px;line-height:12px;font-size:7.5px;color:#161616;letter-spacing:-0.3px;">DemoApp_1024x600</span>
<div style="left:222.3px;top:91.5px;width:1011px;height:492.7px;background:#e6eff4;border:1px solid #aebcc6;"></div>
<div style="left:225.3px;top:94px;width:1006.3px;height:487.2px;background:#fff;border-bottom:1.7px solid #98a6a8;"></div>
<div style="left:296px;top:80px;width:52px;height:12px;background:#d5deec;border:1px solid #a9b7cd;border-bottom:none;border-radius:2px 2px 0 0;"></div>
<span class="t" style="left:299.3px;top:80.3px;line-height:12px;font-size:7.5px;color:#46567a;letter-spacing:0.01px;">DemoApp.tdb</span>
<svg style="left:224px;top:79px" width="73" height="14"><path d="M0 14L7 2Q8 .5 10 .5H69Q71.5 .5 71.5 3V14z" fill="#fff" stroke="#a9b7cd" stroke-width="1"/></svg>
<span class="t" style="left:234.3px;top:80.2px;line-height:12px;font-size:7.5px;font-weight:bold;color:#222;letter-spacing:-0.14px;">MainWindow.cpp</span>
<div style="left:226px;top:94.5px;width:114px;height:14px;background:#fff;border:1px solid #b4bac6;"></div>
<span class="t" style="left:240.3px;top:96px;line-height:12px;font-size:7.5px;color:#2a2a2a;letter-spacing:-0.03px;">MainWindow.OnCreate</span>
<svg style="left:333.5px;top:100px" width="6" height="4" viewBox="0 0 6 4"><path d="M.7 .7L3 3 5.3 .7" fill="none" stroke="#444" stroke-width="1"/></svg>
<div style="left:341.5px;top:95px;width:8.5px;height:13px;background:#eee;border:1px solid #999;"></div>
<svg style="left:343px;top:96.5px" width="6" height="10" viewBox="0 0 6 10"><path d="M1 3.5L3 1L5 3.5zM1 6.5L3 9L5 6.5z" fill="#444"/></svg>
<div style="left:354px;top:94.5px;width:852px;height:14px;background:#fff;border:1px solid #b4bac6;"></div>
<span class="t" style="left:368.2px;top:96px;line-height:12px;font-size:7.5px;color:#2a2a2a;letter-spacing:-0.03px;">void MainWindow::OnCreate()</span>
<svg style="left:1198.5px;top:100px" width="6" height="4" viewBox="0 0 6 4"><path d="M.7 .7L3 3 5.3 .7" fill="none" stroke="#444" stroke-width="1"/></svg>
<div style="left:1208.2px;top:95.6px;width:20.4px;height:12px;background:#f0f0f0;border:1px solid #a0a0a0;"></div>
<span class="t" style="left:1217.5px;top:95.8px;line-height:12px;font-size:7.5px;color:#555;letter-spacing:-0px;">Go</span>
<div style="left:226px;top:111px;width:501px;height:14px;background:#fff;border:1px solid #b4bac6;"></div>
<span class="t" style="left:238.5px;top:112.6px;line-height:12px;font-size:7.5px;color:#2a2a2a;letter-spacing:0.09px;">MainWindow</span>
<svg style="left:718.5px;top:116.5px" width="6" height="4" viewBox="0 0 6 4"><path d="M.7 .7L3 3 5.3 .7" fill="none" stroke="#444" stroke-width="1"/></svg>
<div style="left:729px;top:111px;width:503px;height:14px;background:#fff;border:1px solid #b4bac6;"></div>
<span class="t" style="left:742.5px;top:112.6px;line-height:12px;font-size:7.5px;color:#2a2a2a;letter-spacing:-0.25px;">OnCreate()</span>
<svg style="left:1223px;top:116.5px" width="6" height="4" viewBox="0 0 6 4"><path d="M.7 .7L3 3 5.3 .7" fill="none" stroke="#444" stroke-width="1"/></svg>
<svg style="left:228.8px;top:98.5px" width="6.2" height="7" viewBox="0 0 10 10" preserveAspectRatio="none"><path d="M.8 3.5h4v-2l4.2 3.5-4.2 3.5v-2h-4z" fill="#f0d850" stroke="#6a5a1a" stroke-width=".7"/></svg>
<svg style="left:357.2px;top:98.5px" width="6.2" height="7" viewBox="0 0 10 10" preserveAspectRatio="none"><path d="M.8 3.5h4v-2l4.2 3.5-4.2 3.5v-2h-4z" fill="#f0d850" stroke="#6a5a1a" stroke-width=".7"/></svg>
<svg style="left:228.2px;top:113.8px" width="8.8" height="9" viewBox="0 0 10 10" preserveAspectRatio="none"><rect x="3.5" y="3" width="2.5" height="2.5" fill="none" stroke="#5a5aa8" stroke-width=".8"/><rect x="5.5" y="6" width="2.5" height="2.5" fill="none" stroke="#5a5aa8" stroke-width=".8"/><path d="M4.7 5.5v2h1" stroke="#5a5aa8" stroke-width=".7" fill="none"/><path d="M.5 1l3 .3-2 2z" fill="#e0b83c"/></svg>
<svg style="left:733.5px;top:114.3px" width="8" height="8" viewBox="0 0 10 10" preserveAspectRatio="none"><path d="M3.5 3l3-1.5 3 1.5v3l-3 1.5-3-1.5z" fill="#a060b8"/><path d="M.5 1.5h3M.5 3h2" stroke="#8890a8" stroke-width=".7"/></svg>
<svg style="left:1210px;top:98.1px" width="6.5" height="7" viewBox="0 0 10 10" preserveAspectRatio="none"><circle cx="5" cy="5" r="4" fill="#2f8a3f"/><path d="M2 3.5a3.5 3.5 0 0 1 4-2" stroke="#bfe6c4" stroke-width="1.2" fill="none"/></svg>
<div style="left:224px;top:125.5px;width:1008px;height:2px;background:#cfcfcf;"></div>
<div style="left:226px;top:128px;width:12.5px;height:442px;background:#f6f3f3;"></div>
<div style="left:1220.5px;top:128px;width:10.5px;height:442.4px;background:#f0f0f0;"></div>
<div style="left:1221px;top:160px;width:9.5px;height:166px;background:#c9c9c9;"></div>
<div style="left:1221px;top:128px;width:10px;height:5.8px;background:#f2f2f2;border-bottom:1.2px solid #666;"></div>
<div style="left:225.3px;top:570.4px;width:1006px;height:9.2px;background:#f0f0f0;"></div>
<div style="left:235.5px;top:570.6px;width:863.5px;height:8.8px;background:#c9c9c9;"></div>
<div style="left:236px;top:254px;width:2px;height:31px;background:#a9dba9;"></div>
<span class="c" style="left:244.2px;top:127.82px">{</span>
<span class="c" style="left:244.2px;top:138.38px">}</span>
<span class="c" style="left:244.2px;top:159.5px"><span class="k">MainWindow</span>::<span class="k">~MainWindow</span>(<span class="k">void</span>)</span>
<span class="c" style="left:244.2px;top:170.06px">{</span>
<span class="c" style="left:244.2px;top:180.62px">}</span>
<span class="c" style="left:244.2px;top:201.74px">/*</span>
<span class="c" style="left:244.2px;top:212.3px"> * <span class="g">Creates the layout of the screen</span></span>
<span class="c" style="left:244.2px;top:222.86px"> */</span>
<span class="c" style="left:244.2px;top:233.42px"><span class="k">void</span> <span class="k">MainWindow</span>::<span class="r">OnCreate</span>()</span>
<span class="c" style="left:244.2px;top:243.98px">{</span>
<span class="c" style="left:244.2px;top:254.54px">    <span class="k">this</span>-&gt;<span class="r">SetGridDimensions</span>(3, 3);</span>
<span class="c" style="left:244.2px;top:275.66px">    <span class="k">this</span>-&gt;<span class="r">ContextHelp</span>(<span class="p">PX_HelpMain</span>);</span>
<span class="c" style="left:244.2px;top:296.78px">    // <span class="g">create button jobs</span></span>
<span class="c" style="left:244.2px;top:307.34px">    tsc_<span class="k u">MenuButton</span> *btnJobs = <span class="k">new</span></span>
<span class="c" style="left:244.2px;top:317.9px">    <span class="k">this</span>-&gt;Controls.<span class="r">Add</span>(btnJobs);</span>
<span class="c" style="left:244.2px;top:339.02px">    // <span class="g">create button measure</span></span>
<span class="c" style="left:244.2px;top:349.58px">    tsc_<span class="k u">MenuButton</span> *btnMeasure = <span class="k">new</span></span>
<span class="c" style="left:244.2px;top:360.14px">    <span class="k">this</span>-&gt;Controls.<span class="r">Add</span>(btnMeasure);</span>
<span class="c" style="left:244.2px;top:381.26px">    // <span class="g">create button stakeout</span></span>
<span class="c" style="left:244.2px;top:391.82px">    tsc_<span class="k u">MenuButton</span> *btnStakeout = <span class="k">new</span></span>
<span class="c" style="left:244.2px;top:402.38px">    <span class="k">this</span>-&gt;Controls.<span class="r">Add</span>(btnStakeout);</span>
<span class="c" style="left:244.2px;top:412.94px">}</span>
<span class="c" style="left:244.2px;top:434.06px">tsc_<span class="k u">String</span> <span class="k">MainWindow</span>::<span class="r">OnDrawTitle</span>()</span>
<span class="c" style="left:244.2px;top:444.62px">{</span>
<span class="c" style="left:244.2px;top:455.18px">    <span class="k">return</span> tsc_<span class="k u">String</span>(&quot;DemoApp&quot;);</span>
<span class="c" style="left:244.2px;top:465.74px">}</span>
<span class="c" style="left:244.2px;top:486.86px"><span class="k">void</span> <span class="k">MainWindow</span>::<span class="r">OnButtonClick</span>(<span class="k">int</span> button)</span>
<span class="c" style="left:244.2px;top:497.42px">{</span>
<span class="c" style="left:244.2px;top:507.98px">    // <span class="g">map button to <span class="w">uittask</span></span></span>
<span class="c" style="left:244.2px;top:518.54px">    <span class="k">if</span> (button == <span class="p">X_MenuJobs</span>)</span>
<span class="c" style="left:244.2px;top:529.1px">    {</span>
<span class="c" style="left:244.2px;top:539.66px">        tsc_<span class="k u">SurveyCore</span>::<span class="r">Launch</span>(<span class="p">PX_MenuJobs</span>);</span>
<span class="c" style="left:244.2px;top:550.22px">    }</span>
<span class="c" style="left:244.2px;top:560.78px">    <span class="k">else if</span> (button == <span class="p">X_MenuMeasure</span>)</span>
<svg style="left:0;top:0" width="1280" height="720"><g stroke="#a0a0a0" stroke-width=".8" fill="none">
<path d="M239 127.1V154.22H243"/>
<path d="M239 167.78V196.46H243"/>
<path d="M239 210.02V228.14H243"/>
<path d="M239 241.7V428.78H243"/>
<path d="M239 442.34V481.58H243"/>
<path d="M239 495.14V570"/>
</g>
<rect x="236.4" y="162.18" width="5.2" height="5.2" fill="#fff" stroke="#888" stroke-width=".7"/><path d="M237.6 164.78h2.8" stroke="#555" stroke-width=".7"/>
<rect x="236.4" y="204.42" width="5.2" height="5.2" fill="#fff" stroke="#888" stroke-width=".7"/><path d="M237.6 207.02h2.8" stroke="#555" stroke-width=".7"/>
<rect x="236.4" y="236.1" width="5.2" height="5.2" fill="#fff" stroke="#888" stroke-width=".7"/><path d="M237.6 238.7h2.8" stroke="#555" stroke-width=".7"/>
<rect x="236.4" y="436.74" width="5.2" height="5.2" fill="#fff" stroke="#888" stroke-width=".7"/><path d="M237.6 439.34h2.8" stroke="#555" stroke-width=".7"/>
<rect x="236.4" y="489.54" width="5.2" height="5.2" fill="#fff" stroke="#888" stroke-width=".7"/><path d="M237.6 492.14h2.8" stroke="#555" stroke-width=".7"/>
</svg>
<div style="left:45px;top:586.2px;width:1189px;height:13.8px;background:linear-gradient(#b2bccc 0,#c9d4e9 14%,#d3ddee 45%,#e6eef6 100%);"></div>
<span class="t" style="left:48.2px;top:587.7px;line-height:12px;font-size:7.5px;color:#2a2e3a;letter-spacing:-0.28px;">Find Results 1</span>
<div style="left:45px;top:600px;width:1189px;height:16.5px;background:linear-gradient(#fbfbff 0,#f7f7fd 30%,#e9e9f4 75%,#d6d6dc 100%);"></div>
<div style="left:46px;top:616.5px;width:1186px;height:72px;background:#fff;border-top:1px solid #b9c2d0;"></div>
<div style="left:1220.5px;top:617.5px;width:10.5px;height:62px;background:#f4f4f4;"></div>
<div style="left:46px;top:680px;width:1174.5px;height:8.5px;background:#f4f4f4;"></div>
<div style="left:45px;top:688.6px;width:1189px;height:1px;background:#a6a8ac;"></div>
<div style="left:45px;top:689.5px;width:1189px;height:14.5px;background:#eef1f7;"></div>
<div style="left:45.5px;top:689.5px;width:46px;height:14.3px;background:#f0f2f7;border:1px solid #a4a8b0;border-top:none;"></div>
<svg style="left:47.5px;top:691.75px" width="9.5" height="9.5" viewBox="0 0 10 10" preserveAspectRatio="none"><path d="M1 9V5.5h2.5V3h3v6.5z" fill="#f4f4f6" stroke="#8a8e98" stroke-width=".8"/><path d="M6 2.5a2 2 0 0 1 2.5 2" stroke="#8a8e98" stroke-width=".8" fill="none"/></svg>
<span class="t" style="left:58.5px;top:691px;line-height:12px;font-size:7.4px;color:#666;letter-spacing:-0.28px;">Call Stack</span>
<div style="left:90.5px;top:689.5px;width:56px;height:14.3px;background:#f0f2f7;border:1px solid #a4a8b0;border-top:none;"></div>
<svg style="left:92.5px;top:691.75px" width="9.5" height="9.5" viewBox="0 0 10 10" preserveAspectRatio="none"><rect x=".6" y="1" width="8" height="7" fill="#fbfbfd" stroke="#7a8098" stroke-width=".8"/><rect x=".6" y="1" width="8" height="1.6" fill="#7f94c0"/><circle cx="7" cy="7" r="2.6" fill="#d8403a"/></svg>
<span class="t" style="left:104px;top:691px;line-height:12px;font-size:7.4px;color:#666;letter-spacing:-0.05px;">Breakpoints</span>
<div style="left:145.5px;top:689.5px;width:38.5px;height:14.3px;background:#f0f2f7;border:1px solid #a4a8b0;border-top:none;"></div>
<svg style="left:147.5px;top:691.75px" width="9.5" height="9.5" viewBox="0 0 10 10" preserveAspectRatio="none"><rect x=".6" y="1" width="8.8" height="8" fill="#f4f6fb" stroke="#7a8aa8" stroke-width=".8"/><rect x=".6" y="1" width="8.8" height="1.6" fill="#8fa4cc"/><path d="M3 4.5h4M3 6.5h4" stroke="#7f94b8" stroke-width=".8"/></svg>
<span class="t" style="left:158px;top:691px;line-height:12px;font-size:7.4px;color:#666;letter-spacing:0.13px;">Output</span>
<div style="left:183px;top:689.5px;width:35px;height:14.3px;background:#f0f2f7;border:1px solid #a4a8b0;border-top:none;"></div>
<svg style="left:185px;top:691.75px" width="9.5" height="9.5" viewBox="0 0 10 10" preserveAspectRatio="none"><rect x=".6" y="1" width="8.8" height="8" fill="#e9f0e6" stroke="#5a7a8a" stroke-width=".8"/><rect x=".6" y="1" width="8.8" height="1.8" fill="#4f84b4"/><rect x="2" y="4.5" width="6" height="3.5" fill="#4f9a5a"/></svg>
<span class="t" style="left:196px;top:691px;line-height:12px;font-size:7.4px;color:#666;letter-spacing:0.02px;">Autos</span>
<div style="left:217px;top:689.5px;width:36px;height:14.3px;background:#f0f2f7;border:1px solid #a4a8b0;border-top:none;"></div>
<svg style="left:219px;top:691.75px" width="9.5" height="9.5" viewBox="0 0 10 10" preserveAspectRatio="none"><rect x="2" y=".8" width="7.5" height="7" fill="#dfe8f8" stroke="#4f6ab0" stroke-width=".8"/><rect x=".6" y="2.6" width="7" height="6.8" fill="#f2f5fc" stroke="#4f6ab0" stroke-width=".8"/><path d="M2 5h4M2 7h4" stroke="#6f8ac8" stroke-width=".7"/></svg>
<span class="t" style="left:230.5px;top:691px;line-height:12px;font-size:7.4px;color:#666;letter-spacing:-0.32px;">Locals</span>
<div style="left:252px;top:689.5px;width:42px;height:14.3px;background:#f0f2f7;border:1px solid #a4a8b0;border-top:none;"></div>
<svg style="left:254px;top:691.75px" width="9.5" height="9.5" viewBox="0 0 10 10" preserveAspectRatio="none"><path d="M1 9h8" stroke="#7a808c" stroke-width=".9"/><path d="M2 8c1-3 1-4 3-6M4 8c1-2 2-3 4-4" stroke="#8a909c" stroke-width=".8" fill="none"/><path d="M6 5l2 3" stroke="#8a909c" stroke-width=".8"/></svg>
<span class="t" style="left:265.5px;top:691px;line-height:12px;font-size:7.4px;color:#666;letter-spacing:-0.24px;">Threads</span>
<div style="left:293px;top:689.5px;width:44px;height:14.3px;background:#f0f2f7;border:1px solid #a4a8b0;border-top:none;"></div>
<svg style="left:295px;top:691.75px" width="9.5" height="9.5" viewBox="0 0 10 10" preserveAspectRatio="none"><rect x=".6" y="1" width="8.8" height="8" fill="#f4f6fb" stroke="#7a8aa8" stroke-width=".8"/><rect x=".6" y="1" width="8.8" height="1.6" fill="#8fa4cc"/><rect x="2" y="4" width="3" height="3" fill="#9ab0d4"/><path d="M6 4.5h2.5M6 6.5h2.5" stroke="#8a94aa" stroke-width=".7"/></svg>
<span class="t" style="left:306.5px;top:691px;line-height:12px;font-size:7.4px;color:#666;letter-spacing:-0.07px;">Modules</span>
<div style="left:336px;top:689.5px;width:44px;height:14.3px;background:#f0f2f7;border:1px solid #a4a8b0;border-top:none;"></div>
<svg style="left:338px;top:691.75px" width="9.5" height="9.5" viewBox="0 0 10 10" preserveAspectRatio="none"><rect x="2" y=".8" width="7.5" height="6.5" fill="#eef2fa" stroke="#5a6a90" stroke-width=".8"/><circle cx="3.5" cy="7" r="2" fill="none" stroke="#3a4460" stroke-width=".9"/><circle cx="7" cy="7" r="2" fill="none" stroke="#3a4460" stroke-width=".9"/></svg>
<span class="t" style="left:350px;top:691px;line-height:12px;font-size:7.4px;color:#666;letter-spacing:-0.12px;">Watch 1</span>
<div style="left:379px;top:689px;width:60.5px;height:15px;background:#fff;border:1px solid #a4a8b0;border-top:none;"></div>
<svg style="left:381px;top:692.05px" width="9.5" height="9.5" viewBox="0 0 10 10" preserveAspectRatio="none"><rect x=".6" y="1" width="8.5" height="6" fill="#e4e8f0" stroke="#4a5068" stroke-width=".8"/><rect x=".6" y="1" width="8.5" height="1.6" fill="#5a6484"/><path d="M3 7.5l-1 2M6 7.5l1 2M4 4h3" stroke="#3a4058" stroke-width=".9"/></svg>
<span class="t" style="left:391.5px;top:691px;line-height:12px;font-size:7.4px;color:#222;letter-spacing:-0.2px;">Find Results 1</span>
<div style="left:45px;top:704px;width:1189px;height:16px;background:#f0f0f0;"></div>
<span class="t" style="left:51px;top:708px;line-height:12px;font-size:7.4px;color:#222;letter-spacing:-0.28px;">Ready</span>
<span class="t" style="left:1027.2px;top:707.8px;line-height:12px;font-size:7.2px;color:#222;letter-spacing:-0.24px;">Ln 19</span>
<span class="t" style="left:1077.9px;top:707.8px;line-height:12px;font-size:7.2px;color:#222;letter-spacing:-0.04px;">Col 36</span>
<span class="t" style="left:1133.6px;top:707.8px;line-height:12px;font-size:7.2px;color:#222;letter-spacing:-0.24px;">Ch 33</span>
<span class="t" style="left:1215.8px;top:707.8px;line-height:12px;font-size:7.2px;color:#222;letter-spacing:-0.27px;">INS</span>
<svg style="left:180.2px;top:84.5px" width="7" height="4" viewBox="0 0 7 4"><path d="M0 0h7l-3.5 3.8z" fill="#3a3a3a"/></svg>
<svg style="left:193px;top:81px" width="7" height="10" viewBox="0 0 7 10"><path d="M1.7 .6h3.6v4.4h-3.6zM.4 5.1h6.2M3.5 5.1v4.2" fill="#f4f6fa" stroke="#3a3a3a" stroke-width=".8"/><path d="M4.9 .6v4.4" stroke="#3a3a3a" stroke-width="1.2"/></svg>
<svg style="left:207.2px;top:82.5px" width="7" height="7" viewBox="0 0 7 7"><path d="M.5 .5l6 6M6.5 .5l-6 6" stroke="#3a3a3a" stroke-width="1.5"/></svg>
<svg style="left:210px;top:111px" width="8" height="8" viewBox="-4 -4 8 8"><path d="M-2.2 1.1L0 -1.1L2.2 1.1" fill="none" stroke="#555" stroke-width="1.1"/></svg>
<svg style="left:210px;top:548px" width="8" height="8" viewBox="-4 -4 8 8"><path d="M-2.2 -1.1L0 1.1L2.2 -1.1" fill="none" stroke="#555" stroke-width="1.1"/></svg>
<svg style="left:47px;top:558.5px" width="8" height="8" viewBox="-4 -4 8 8"><path d="M1.1 -2.2L-1.1 0L1.1 2.2" fill="none" stroke="#555" stroke-width="1.1"/></svg>
<svg style="left:199.5px;top:558.5px" width="8" height="8" viewBox="-4 -4 8 8"><path d="M-1.1 -2.2L1.1 0L-1.1 2.2" fill="none" stroke="#555" stroke-width="1.1"/></svg>
<svg style="left:1221.5px;top:135.5px" width="8" height="8" viewBox="-4 -4 8 8"><path d="M-2.2 1.1L0 -1.1L2.2 1.1" fill="none" stroke="#555" stroke-width="1.1"/></svg>
<svg style="left:1221.5px;top:560.5px" width="8" height="8" viewBox="-4 -4 8 8"><path d="M-2.2 -1.1L0 1.1L2.2 -1.1" fill="none" stroke="#555" stroke-width="1.1"/></svg>
<svg style="left:225px;top:571.3px" width="8" height="8" viewBox="-4 -4 8 8"><path d="M1.1 -2.2L-1.1 0L1.1 2.2" fill="none" stroke="#555" stroke-width="1.1"/></svg>
<svg style="left:1211px;top:571.3px" width="8" height="8" viewBox="-4 -4 8 8"><path d="M-1.1 -2.2L1.1 0L-1.1 2.2" fill="none" stroke="#555" stroke-width="1.1"/></svg>
<svg style="left:1211.87px;top:84.03px" width="5.46" height="3.12" viewBox="0 0 7 4"><path d="M0 0h7l-3.5 3.8z" fill="#333"/></svg>
<svg style="left:1222.87px;top:82.47px" width="5.46" height="5.46" viewBox="0 0 7 7"><path d="M.5 .5l6 6M6.5 .5l-6 6" stroke="#333" stroke-width="1.5"/></svg>
<svg style="left:1194.8px;top:592.5px" width="7" height="4" viewBox="0 0 7 4"><path d="M0 0h7l-3.5 3.8z" fill="#333"/></svg>
<svg style="left:1207.9px;top:589px" width="7" height="10" viewBox="0 0 7 10"><path d="M1.7 .6h3.6v4.4h-3.6zM.4 5.1h6.2M3.5 5.1v4.2" fill="#f4f6fa" stroke="#333" stroke-width=".8"/><path d="M4.9 .6v4.4" stroke="#333" stroke-width="1.2"/></svg>
<svg style="left:1221.9px;top:590.5px" width="7" height="7" viewBox="0 0 7 7"><path d="M.5 .5l6 6M6.5 .5l-6 6" stroke="#333" stroke-width="1.5"/></svg>
<svg style="left:1222px;top:619.5px" width="8" height="8" viewBox="-4 -4 8 8"><path d="M-2.2 1.1L0 -1.1L2.2 1.1" fill="none" stroke="#bbb" stroke-width="1.1"/></svg>
<svg style="left:1222px;top:670px" width="8" height="8" viewBox="-4 -4 8 8"><path d="M-2.2 -1.1L0 1.1L2.2 -1.1" fill="none" stroke="#bbb" stroke-width="1.1"/></svg>
<svg style="left:48px;top:680px" width="8" height="8" viewBox="-4 -4 8 8"><path d="M1.1 -2.2L-1.1 0L1.1 2.2" fill="none" stroke="#ccc" stroke-width="1.1"/></svg>
<svg style="left:1213px;top:680px" width="8" height="8" viewBox="-4 -4 8 8"><path d="M-1.1 -2.2L1.1 0L-1.1 2.2" fill="none" stroke="#ccc" stroke-width="1.1"/></svg>
<svg style="left:51.5px;top:604.55px" width="7.5" height="9.5" viewBox="0 0 10 10" preserveAspectRatio="none"><path d="M6 1.5a3.5 3.5 0 0 1 -1 7" stroke="#b8bcc6" stroke-width="1.2" fill="none"/><path d="M2 8l2.5-2v4z" fill="#b8bcc6"/></svg>
<svg style="left:69.6px;top:604.55px" width="8.8" height="9.5" viewBox="0 0 10 10" preserveAspectRatio="none"><path d="M1 8.5h8" stroke="#9ea2ac" stroke-width="1"/><path d="M3 7V3.5l3-2V7" stroke="#b4b8c2" stroke-width="1" fill="none"/></svg>
<svg style="left:82.8px;top:604.55px" width="9.2" height="9.5" viewBox="0 0 10 10" preserveAspectRatio="none"><path d="M1 8.5h8" stroke="#9ea2ac" stroke-width="1"/><path d="M2.5 6.5l2.5-4 2.5 4" stroke="#b4b8c2" stroke-width="1" fill="none"/></svg>
<svg style="left:101px;top:604.55px" width="8.6" height="9.5" viewBox="0 0 10 10" preserveAspectRatio="none"><path d="M2 2l6 6.5M7.5 2l-4.5 6.5" stroke="#c8ccd4" stroke-width="1.2"/></svg>
<svg style="left:118.4px;top:604.55px" width="9.4" height="9.5" viewBox="0 0 10 10" preserveAspectRatio="none"><path d="M2.5 1h2v4h-2zM6 1h2v4h-2z" fill="#4a4f5c"/><rect x="1" y="4.5" width="3.8" height="5" fill="#5a6070"/><rect x="5.2" y="4.5" width="3.8" height="5" fill="#5a6070"/><rect x="5.8" y="7" width="3.5" height="2.8" fill="#aeb4c4"/></svg>
<div style="left:63.5px;top:603.5px;width:1px;height:11px;background:#b9c0cc;"></div>
<div style="left:95.5px;top:603.5px;width:1px;height:11px;background:#b9c0cc;"></div>
<div style="left:113.5px;top:603.5px;width:1px;height:11px;background:#b9c0cc;"></div>
<div style="left:45px;top:616.2px;width:1189px;height:1.3px;background:#bdbdbf;"></div>
<div style="left:391.5px;top:194.5px;width:400.3px;height:302px;background:#f4f4f4;border-right:1.8px solid #8e8e8e;border-bottom:1.8px solid #8e8e8e;"></div>
<div style="left:393.1px;top:222px;width:392px;height:268px;background:#ededed;"></div>
<div style="left:393.1px;top:197px;width:396.4px;height:25px;background:#404040;"></div>
<div style="left:397px;top:199.8px;width:23.5px;height:17.5px;background:#2d2d2d;"></div>
<svg style="left:399px;top:199px" width="20" height="19" viewBox="399 199 20 19"><g filter="url(#bl)"><path d="M401.8 200.6Q410 203.5 417.7 208.3Q410 213.1 401.8 216Q404 208.3 401.8 200.6z" fill="#f6f6f6"/><circle cx="408" cy="208.3" r="6.4" fill="#f2f2f2"/><path d="M403.5 206Q408 202.5 413 205.5M403.5 211Q408.5 214 413.5 210.5M405 208.5Q408 207 411 209" stroke="#333" stroke-width="1" fill="none"/><circle cx="408.3" cy="206.8" r="1.1" fill="#3a3a3a"/><circle cx="411.8" cy="209.8" r=".9" fill="#444"/></g></svg>
<span class="t" style="left:428.5px;top:197.5px;line-height:22px;font-size:17px;color:#fff;letter-spacing:0.56px;-webkit-text-stroke:.35px #fff;">DemoApp - No current job</span>
<div style="left:659.5px;top:200px;width:25px;height:17.5px;background:#303030;"></div>
<div style="left:685.5px;top:200px;width:22.5px;height:17.5px;background:#303030;"></div>
<div style="left:717px;top:200px;width:22.5px;height:17.5px;background:#303030;"></div>
<div style="left:740.5px;top:200px;width:22.5px;height:17.5px;background:#303030;"></div>
<div style="left:764px;top:200px;width:23px;height:17.5px;background:#303030;"></div>
<span class="t" style="left:723.3px;top:200.7px;line-height:16px;font-size:13px;font-weight:bold;color:#fff;-webkit-text-stroke:.4px #fff;">?</span>
<div style="left:745.5px;top:208px;width:12px;height:2.5px;background:#fff;"></div>
<svg style="left:768px;top:201px" width="15" height="15"><path d="M3 3l9 9M12 3l-9 9" stroke="#fff" stroke-width="2.4"/></svg>
<svg style="left:663px;top:200px" width="44" height="18"><circle cx="11" cy="8.8" r="6.3" fill="#fff"/><path d="M1 8.8h6.5M5 5.5l3.3 3.3-3.3 3.3" stroke="#303030" stroke-width="3.6" fill="none"/><path d="M1 8.8h6.8M5 5.5l3.3 3.3-3.3 3.3" stroke="#fff" stroke-width="1.9" fill="none"/><circle cx="32.5" cy="8.8" r="6.3" fill="#fff"/><path d="M29.3 12.3l6.5-7" stroke="#303030" stroke-width="2"/></svg>
<div style="left:424.6px;top:310.2px;width:93.3px;height:94.3px;border:1.3px solid #707070;border-radius:4.5px;background:#fdfdfd;"></div>
<div style="left:427.9px;top:313.3px;width:86.7px;height:88.2px;background:radial-gradient(ellipse 70% 60% at 50% 68%,#ececec 0%,#e0e0e0 35%,#d2d2d2 70%,#c8c8c8 100%);border-radius:2px;"></div>
<span class="t" style="left:453.95px;top:383.6px;line-height:18px;font-size:15px;font-weight:bold;letter-spacing:-0.08px;color:#111"><span style="text-decoration:underline;text-decoration-thickness:.8px;text-underline-offset:1.2px">J</span>obs</span>
<div style="left:543.5px;top:310.2px;width:93.3px;height:94.3px;border:1.3px solid #707070;border-radius:4.5px;background:#fdfdfd;"></div>
<div style="left:546.8px;top:313.3px;width:86.7px;height:88.2px;background:radial-gradient(ellipse 70% 60% at 50% 68%,#ececec 0%,#e0e0e0 35%,#d2d2d2 70%,#c8c8c8 100%);border-radius:2px;"></div>
<span class="t" style="left:559.5px;top:383.6px;line-height:18px;font-size:15px;font-weight:bold;letter-spacing:0.08px;color:#111"><span style="text-decoration:underline;text-decoration-thickness:.8px;text-underline-offset:1.2px">M</span>easure</span>
<div style="left:662.8px;top:310.2px;width:93.3px;height:94.3px;border:1.3px solid #707070;border-radius:4.5px;background:#fdfdfd;"></div>
<div style="left:666.1px;top:313.3px;width:86.7px;height:88.2px;background:#6b6b6b;border-radius:2px;"></div>
<span class="t" style="left:677.05px;top:383.6px;line-height:18px;font-size:15px;font-weight:bold;letter-spacing:0.19px;color:#fff"><span style="text-decoration:underline;text-decoration-thickness:.8px;text-underline-offset:1.2px">S</span>takeout</span>
<svg style="left:440px;top:314px" width="70" height="56" viewBox="440 314 70 56"><defs><linearGradient id="fg1" x1="0" y1="0" x2="1" y2="1"><stop offset="0" stop-color="#ffe040"/><stop offset=".5" stop-color="#fccf08"/><stop offset="1" stop-color="#f3bf00"/></linearGradient><filter id="bl" x="-20%" y="-20%" width="140%" height="140%"><feGaussianBlur stdDeviation=".5"/></filter></defs><g filter="url(#bl)"><path d="M448.5 322.5Q448.5 320.8 450.5 320.8L465 320.6Q467 320.6 467.5 322.5L468.3 325L495 324.5L495 340L448.5 350z" fill="#f2c400"/><path d="M448.5 323V358L451 359.5V331z" fill="#9a8430"/><path d="M451.5 329.5L497 326.2L496 340L451.5 345z" fill="#f8f8f0"/><path d="M450.6 331L502 327.2L497.3 350L450.6 359.8z" fill="url(#fg1)"/></g></svg>
<svg style="left:565px;top:312px" width="52" height="56" viewBox="565 312 52 56"><defs><radialGradient id="pg1" cx=".4" cy=".35" r=".8"><stop offset="0" stop-color="#ffe84a"/><stop offset=".6" stop-color="#f8c808"/><stop offset="1" stop-color="#d89c00"/></radialGradient></defs><g filter="url(#bl)"><path d="M583 334.5Q583 332 586 332H606Q609 332 609 335V350Q609 352 607 352H603V354.5Q594 357 583 354.5z" fill="url(#pg1)"/><path d="M601.5 336V352" stroke="#c89400" stroke-width="1"/><circle cx="593.1" cy="325.1" r="6.5" fill="url(#pg1)"/><path d="M573.5 317.3H585.3L583.3 326.5H575.5z" fill="#d8d8d8"/><path d="M573.3 316.8H585.5V320H573.3z" fill="#fafafa"/><path d="M579.2 326V363.5H581.8V326z" fill="#1e1e1e"/><path d="M577 329H583.5V345H577z" fill="#2c2c2c"/><circle cx="580.3" cy="334" r="1.6" fill="#ddd"/><path d="M573.5 343Q573.5 339.5 577 339.5H582.5V355H577Q573.5 355 573.5 351z" fill="#f0bc04"/><path d="M579.2 345V363.5H581.8V345z" fill="#1e1e1e"/></g></svg>
<svg style="left:684px;top:312px" width="56" height="62" viewBox="684 312 56 62"><defs><radialGradient id="pg2" cx=".4" cy=".35" r=".8"><stop offset="0" stop-color="#ffe84a"/><stop offset=".6" stop-color="#f8c808"/><stop offset="1" stop-color="#d89c00"/></radialGradient></defs><g filter="url(#bl)"><ellipse cx="699.8" cy="362" rx="12" ry="5" fill="none" stroke="#c4c4c4" stroke-width="1.6"/><ellipse cx="699.8" cy="362" rx="6.5" ry="2.6" fill="none" stroke="#d8d8d8" stroke-width="1.4"/><path d="M725 337L729.5 358L733.5 337" fill="none" stroke="#a8b0b0" stroke-width="1.8"/><path d="M702 334.5Q702 332 705 332H724Q728 332 728.5 336L731 347Q731 350 728.5 350L726 340V352.5Q714 356 702 353.5z" fill="url(#pg2)"/><path d="M730 340L733.5 343L731.5 349z" fill="#f4c808"/><circle cx="711.8" cy="325.1" r="6.3" fill="url(#pg2)"/><path d="M693.5 316.5H704.7L703 325H695.5z" fill="#6a6a6a"/><path d="M693.3 316.3H704.9V321.5H693.3z" fill="#f4f4f0"/><path d="M698.3 322V362H700.7V322z" fill="#1a1a1a"/><path d="M696 328H702.5V343H696z" fill="#2c2c2c"/><circle cx="699.4" cy="333" r="1.5" fill="#ccc"/><path d="M692.5 342Q692.5 338.5 696 338.5H701.5V353.5H696Q692.5 353.5 692.5 350z" fill="#f0bc04"/><path d="M698.3 343V362H700.7V343z" fill="#1a1a1a"/></g></svg>
<svg style="left:720px;top:233px" width="12" height="16" viewBox="0 0 12 16"><path d="M1.5 1.5V12L4 9.8L6 14L7.8 13.2L5.9 9.2H9.2z" fill="#fff" stroke="#555" stroke-width=".9"/></svg>
</div></body></html>
